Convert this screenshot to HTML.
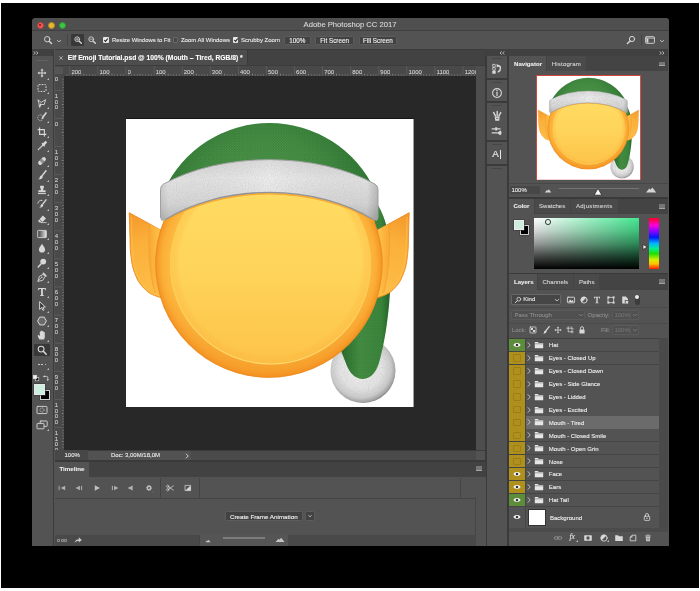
<!DOCTYPE html>
<html><head><meta charset="utf-8">
<style>
*{margin:0;padding:0;box-sizing:border-box}
html,body{width:700px;height:591px;background:#fff;overflow:hidden}
body{font-family:"Liberation Sans",sans-serif;color:#ddd;position:relative}
.a{position:absolute}
.t{position:absolute;white-space:nowrap;line-height:1.12;color:#e2e2e2;-webkit-text-stroke:0.1px currentColor}
.b{font-weight:bold;color:#fff}
svg{overflow:visible}
.s{fill:none;stroke:#d8d8d8;stroke-width:0.9;stroke-linecap:round;stroke-linejoin:round}
.f{fill:#d8d8d8}
</style></head><body>
<div class="a" style="left:0;top:0;width:700px;height:591px;will-change:transform">

<div class="a" style="left:1.00px;top:3.00px;width:698.00px;height:584.80px;background:#000;"></div>
<div class="a" style="left:31.50px;top:18.00px;width:637.00px;height:527.70px;background:#535353;border-radius:3.5px 3.5px 0 0"></div>
<div class="a" style="left:31.50px;top:18.00px;width:637.00px;height:12.20px;background:#4f4f4f;border-radius:3.5px 3.5px 0 0"></div>
<div class="a" style="left:31.50px;top:30.00px;width:637.00px;height:0.80px;background:#404040;"></div>
<div class="a" style="left:36.50px;top:21.60px;width:7.00px;height:7.00px;background:#f25a56;border-radius:50%;border:0.6px solid #b8403c"></div>
<div class="a" style="left:47.60px;top:21.60px;width:7.00px;height:7.00px;background:#e9b62f;border-radius:50%;border:0.6px solid #b08a24"></div>
<div class="a" style="left:58.70px;top:21.60px;width:7.00px;height:7.00px;background:#3cc540;border-radius:50%;border:0.6px solid #2f9634"></div>
<div class="a" style="left:39.00px;top:24.10px;width:2.00px;height:2.00px;background:#6e1613;border-radius:50%"></div>
<div class="t" style="left:250px;width:200px;text-align:center;top:21.0px;font-size:7.64px;color:#dadada">Adobe Photoshop CC 2017</div>
<svg class="a" style="left:40.90px;top:32.60px;" width="14" height="14" viewBox="-7 -7 14 14"><circle cx="-0.8" cy="-0.8" r="2.7" class="s" style="stroke-width:0.95"/><path d="M1.44,1.44 L3.54,3.54" class="s" style="stroke-width:1.4"/></svg>
<svg class="a" style="left:54.60px;top:36.80px;" width="8" height="8" viewBox="-4 -4 8 8"><path d="M-1.7,-0.55 L0,0.8500000000000001 L1.7,-0.55" fill="none" stroke="#cfcfcf" stroke-width="0.8" stroke-linecap="round" stroke-linejoin="round"/></svg>
<div class="a" style="left:66.60px;top:34.00px;width:0.70px;height:12.00px;background:#454545;"></div>
<div class="a" style="left:70.90px;top:34.30px;width:12.80px;height:11.40px;background:#383838;border-radius:1px"></div>
<svg class="a" style="left:71.60px;top:34.00px;" width="12" height="12" viewBox="-6 -6 12 12"><circle cx="-0.8" cy="-0.8" r="2.4" class="s" style="stroke-width:0.85"/><path d="M1.23,1.23 L3.33,3.33" class="s" style="stroke-width:1.4"/><path d="M-2.1,-0.8 H0.5 M-0.8,-2.1 V0.5" class="s" style="stroke-width:0.65"/></svg>
<svg class="a" style="left:85.60px;top:34.00px;" width="12" height="12" viewBox="-6 -6 12 12"><circle cx="-0.8" cy="-0.8" r="2.4" class="s" style="stroke-width:0.85"/><path d="M1.23,1.23 L3.33,3.33" class="s" style="stroke-width:1.4"/><path d="M-2.1,-0.8 H0.5" class="s" style="stroke-width:0.65"/></svg>
<div class="a" style="left:103.20px;top:37.00px;width:5.60px;height:5.60px;background:#e8e8e8;border-radius:1px"></div>
<svg class="a" style="left:103.00px;top:36.80px;" width="6" height="6" viewBox="-3 -3 6 6"><path d="M-1.7,0 L-0.5,1.3 L1.8,-1.5" fill="none" stroke="#222" stroke-width="1.1"/></svg>
<div class="t" style="left:112.00px;top:36.68px;font-size:5.92px;color:#ececec;">Resize Windows to Fit</div>
<div class="a" style="left:172.70px;top:37.00px;width:5.60px;height:5.60px;background:#484848;border-radius:1px;border:0.6px solid #686868"></div>
<div class="t" style="left:180.90px;top:36.66px;font-size:5.97px;color:#ececec;">Zoom All Windows</div>
<div class="a" style="left:232.70px;top:37.00px;width:5.60px;height:5.60px;background:#e8e8e8;border-radius:1px"></div>
<svg class="a" style="left:232.50px;top:36.80px;" width="6" height="6" viewBox="-3 -3 6 6"><path d="M-1.7,0 L-0.5,1.3 L1.8,-1.5" fill="none" stroke="#222" stroke-width="1.1"/></svg>
<div class="t" style="left:240.90px;top:36.64px;font-size:6.0px;color:#ececec;">Scrubby Zoom</div>
<div class="a" style="left:283.70px;top:35.60px;width:27.20px;height:9.20px;background:#424242;border:0.6px solid #5c5c5c;border-radius:1.5px"></div>
<div class="t" style="left:283.7px;width:27.2px;text-align:center;top:36.67px;font-size:6.3px;color:#f2f2f2;-webkit-text-stroke:0.12px #f2f2f2">100%</div>
<div class="a" style="left:314.90px;top:35.60px;width:39.40px;height:9.20px;background:#424242;border:0.6px solid #5c5c5c;border-radius:1.5px"></div>
<div class="t" style="left:314.9px;width:39.4px;text-align:center;top:36.67px;font-size:6.3px;color:#f2f2f2;-webkit-text-stroke:0.12px #f2f2f2">Fit Screen</div>
<div class="a" style="left:358.60px;top:35.60px;width:38.60px;height:9.20px;background:#424242;border:0.6px solid #5c5c5c;border-radius:1.5px"></div>
<div class="t" style="left:358.6px;width:38.6px;text-align:center;top:36.67px;font-size:6.3px;color:#f2f2f2;-webkit-text-stroke:0.12px #f2f2f2">Fill Screen</div>
<svg class="a" style="left:624.50px;top:33.60px;" width="12" height="12" viewBox="-6 -6 12 12"><circle cx="1" cy="-1" r="2.6" class="s" style="stroke-width:1"/><path d="M-0.9,0.9 L-3.6,3.6" class="s" style="stroke-width:1.4"/></svg>
<div class="a" style="left:641.20px;top:34.00px;width:0.70px;height:12.00px;background:#454545;"></div>
<svg class="a" style="left:644.00px;top:34.00px;" width="12" height="12" viewBox="-6 -6 12 12"><rect x="-4.4" y="-3.3" width="8.8" height="6.6" rx="0.8" class="s" style="stroke-width:0.9"/><rect x="-3.6" y="-1.6" width="2" height="4.2" fill="#d8d8d8"/><path d="M-4.4,-1.9 H4.4" class="s" style="stroke-width:0.8"/></svg>
<svg class="a" style="left:658.00px;top:36.80px;" width="8" height="8" viewBox="-4 -4 8 8"><path d="M-1.7,-0.55 L0,0.8500000000000001 L1.7,-0.55" fill="none" stroke="#cfcfcf" stroke-width="0.8" stroke-linecap="round" stroke-linejoin="round"/></svg>
<div class="a" style="left:31.50px;top:49.20px;width:22.00px;height:6.60px;background:#404040;"></div>
<svg class="a" style="left:32.80px;top:49.80px;" width="6" height="6" viewBox="-3 -3 6 6"><path d="M-2.2,-1.6 L-0.7,0 L-2.2,1.6 M0.4,-1.6 L1.9,0 L0.4,1.6" fill="none" stroke="#d0d0d0" stroke-width="0.85"/></svg>
<div class="a" style="left:53.30px;top:49.50px;width:1.20px;height:496.20px;background:#3c3c3c;"></div>
<div class="a" style="left:36.40px;top:59.70px;width:11.60px;height:0.80px;background:#626262;"></div>
<svg class="a" style="left:36.20px;top:67.40px;" width="12" height="12" viewBox="-6 -6 12 12"><path d="M0,-4.4 L1.5,-2.6 H-1.5 Z M0,4.4 L1.5,2.6 H-1.5 Z M-4.4,0 L-2.6,-1.5 V1.5 Z M4.4,0 L2.6,-1.5 V1.5 Z" class="f"/><path d="M0,-3 V3 M-3,0 H3" class="s" style="stroke-width:1"/></svg>
<svg class="a" style="left:46.80px;top:77.60px;" width="2" height="2" viewBox="-1 -1 2 2"><path d="M0.9,-0.9 V0.9 H-0.9 Z" fill="#cfcfcf"/></svg>
<svg class="a" style="left:36.20px;top:81.96px;" width="12" height="12" viewBox="-6 -6 12 12"><rect x="-4" y="-3.4" width="8" height="6.8" rx="0.8" fill="none" stroke="#d8d8d8" stroke-width="1" stroke-dasharray="1.7 1.1"/></svg>
<svg class="a" style="left:46.80px;top:92.16px;" width="2" height="2" viewBox="-1 -1 2 2"><path d="M0.9,-0.9 V0.9 H-0.9 Z" fill="#cfcfcf"/></svg>
<svg class="a" style="left:36.20px;top:96.52px;" width="12" height="12" viewBox="-6 -6 12 12"><path d="M-3.8,-3 L-0.8,-0.6 L3.6,-3.4 L2.2,1.6 L-1.2,1.4 L-2.6,3.8 L-3,0.6 Z" class="s" style="stroke-width:0.9"/><path d="M-1.4,1.2 L-2.2,4.2" class="s" style="stroke-width:1.2"/></svg>
<svg class="a" style="left:46.80px;top:106.72px;" width="2" height="2" viewBox="-1 -1 2 2"><path d="M0.9,-0.9 V0.9 H-0.9 Z" fill="#cfcfcf"/></svg>
<svg class="a" style="left:36.20px;top:111.08px;" width="12" height="12" viewBox="-6 -6 12 12"><ellipse cx="-1.6" cy="0.8" rx="2.6" ry="3" fill="none" stroke="#d8d8d8" stroke-width="0.8" stroke-dasharray="1.2 0.9"/><path d="M4,-4 L0.6,0.4" class="s" style="stroke-width:1.6"/><path d="M0.4,0.2 L-1,2.4 L1.4,1.2 Z" class="f"/></svg>
<svg class="a" style="left:46.80px;top:121.28px;" width="2" height="2" viewBox="-1 -1 2 2"><path d="M0.9,-0.9 V0.9 H-0.9 Z" fill="#cfcfcf"/></svg>
<svg class="a" style="left:36.20px;top:125.64px;" width="12" height="12" viewBox="-6 -6 12 12"><path d="M-2.4,-4.4 V2.4 H4.4 M-4.4,-2.4 H2.4 V4.4" class="s" style="stroke-width:1.1;stroke-linecap:butt"/></svg>
<svg class="a" style="left:46.80px;top:135.84px;" width="2" height="2" viewBox="-1 -1 2 2"><path d="M0.9,-0.9 V0.9 H-0.9 Z" fill="#cfcfcf"/></svg>
<svg class="a" style="left:36.20px;top:140.20px;" width="12" height="12" viewBox="-6 -6 12 12"><path d="M3.6,-3.6 L1.2,-1.2" class="s" style="stroke-width:2.6"/><path d="M0.2,-2.6 L2.6,-0.2" class="s" style="stroke-width:1.1"/><path d="M1,-0.6 L-3,3.4 L-4,4 L-3.4,3 L0.6,-1" class="s" style="stroke-width:1"/></svg>
<svg class="a" style="left:46.80px;top:150.40px;" width="2" height="2" viewBox="-1 -1 2 2"><path d="M0.9,-0.9 V0.9 H-0.9 Z" fill="#cfcfcf"/></svg>
<svg class="a" style="left:36.20px;top:154.76px;" width="12" height="12" viewBox="-6 -6 12 12"><g transform="rotate(-45)"><rect x="-4.6" y="-2" width="9.2" height="4" rx="1.8" class="f"/><rect x="-1.5" y="-2" width="3" height="4" fill="#535353" opacity="0.55"/></g></svg>
<svg class="a" style="left:46.80px;top:164.96px;" width="2" height="2" viewBox="-1 -1 2 2"><path d="M0.9,-0.9 V0.9 H-0.9 Z" fill="#cfcfcf"/></svg>
<svg class="a" style="left:36.20px;top:169.32px;" width="12" height="12" viewBox="-6 -6 12 12"><path d="M4,-4.2 L0.2,0.6" class="s" style="stroke-width:1.5"/><path d="M-0.4,0.4 C-2,0.6 -2.4,2 -2.4,3 C-2.6,3.8 -3.6,4.2 -4,4.2 C-1.8,4.6 0.4,3.8 0.9,1.7 Z" class="f"/></svg>
<svg class="a" style="left:46.80px;top:179.52px;" width="2" height="2" viewBox="-1 -1 2 2"><path d="M0.9,-0.9 V0.9 H-0.9 Z" fill="#cfcfcf"/></svg>
<svg class="a" style="left:36.20px;top:183.88px;" width="12" height="12" viewBox="-6 -6 12 12"><path d="M-1.3,-4.2 H1.3 C2.2,-4.2 2.2,-2.6 1.4,-1.6 L1,0.2 H3.6 V2.2 H-3.6 V0.2 H-1 L-1.4,-1.6 C-2.2,-2.6 -2.2,-4.2 -1.3,-4.2 Z" class="f"/><path d="M-3.6,3.6 H3.6" class="s" style="stroke-width:1"/></svg>
<svg class="a" style="left:46.80px;top:194.08px;" width="2" height="2" viewBox="-1 -1 2 2"><path d="M0.9,-0.9 V0.9 H-0.9 Z" fill="#cfcfcf"/></svg>
<svg class="a" style="left:36.20px;top:198.44px;" width="12" height="12" viewBox="-6 -6 12 12"><path d="M4,-4.2 L0.8,0.2" class="s" style="stroke-width:1.4"/><path d="M0.2,0 C-1.2,0.2 -1.4,1.4 -1.4,2.2 C-1.6,3 -2.4,3.4 -2.8,3.4 C-1,3.8 0.8,3 1.3,1.2 Z" class="f"/><path d="M-4.2,-0.6 A3,3 0 0 1 -0.4,-3.6" class="s" style="stroke-width:0.8"/><path d="M-0.2,-4.6 L0.6,-3.2 L-1,-3 Z" class="f"/></svg>
<svg class="a" style="left:46.80px;top:208.64px;" width="2" height="2" viewBox="-1 -1 2 2"><path d="M0.9,-0.9 V0.9 H-0.9 Z" fill="#cfcfcf"/></svg>
<svg class="a" style="left:36.20px;top:213.00px;" width="12" height="12" viewBox="-6 -6 12 12"><path d="M0.8,-3.6 L4,-0.4 L0,3.6 H-2.4 L-4,2 Z" class="f"/><path d="M-2.6,0.6 L0.6,3.6" stroke="#535353" stroke-width="0.8"/><path d="M-1,3.6 H4.2" class="s" style="stroke-width:0.8"/></svg>
<svg class="a" style="left:46.80px;top:223.20px;" width="2" height="2" viewBox="-1 -1 2 2"><path d="M0.9,-0.9 V0.9 H-0.9 Z" fill="#cfcfcf"/></svg>
<svg class="a" style="left:36.20px;top:227.56px;" width="12" height="12" viewBox="-6 -6 12 12"><defs><linearGradient id="gtool" x1="0" x2="1"><stop offset="0" stop-color="#3a3a3a"/><stop offset="1" stop-color="#e6e6e6"/></linearGradient></defs><rect x="-4.3" y="-3.6" width="8.6" height="7.2" rx="0.6" fill="url(#gtool)" stroke="#d8d8d8" stroke-width="0.9"/></svg>
<svg class="a" style="left:46.80px;top:237.76px;" width="2" height="2" viewBox="-1 -1 2 2"><path d="M0.9,-0.9 V0.9 H-0.9 Z" fill="#cfcfcf"/></svg>
<svg class="a" style="left:36.20px;top:242.12px;" width="12" height="12" viewBox="-6 -6 12 12"><path d="M0,-4.2 C1.4,-1.8 3.1,-0.2 3.1,1.5 A3.1,3.1 0 0 1 -3.1,1.5 C-3.1,-0.2 -1.4,-1.8 0,-4.2 Z" class="f"/></svg>
<svg class="a" style="left:46.80px;top:252.32px;" width="2" height="2" viewBox="-1 -1 2 2"><path d="M0.9,-0.9 V0.9 H-0.9 Z" fill="#cfcfcf"/></svg>
<svg class="a" style="left:36.20px;top:256.68px;" width="12" height="12" viewBox="-6 -6 12 12"><circle cx="1.2" cy="-1.4" r="2.9" class="f"/><path d="M-0.8,0.8 L-3.8,4" class="s" style="stroke-width:1.4"/></svg>
<svg class="a" style="left:46.80px;top:266.88px;" width="2" height="2" viewBox="-1 -1 2 2"><path d="M0.9,-0.9 V0.9 H-0.9 Z" fill="#cfcfcf"/></svg>
<svg class="a" style="left:36.20px;top:271.24px;" width="12" height="12" viewBox="-6 -6 12 12"><path d="M-4,4 L-2.6,-0.6 L1,-2.6 L3,-0.6 L1,3 Z" class="s" style="stroke-width:0.9"/><path d="M-4,4 L-0.6,0.6" class="s" style="stroke-width:0.7"/><circle cx="-0.2" cy="0.2" r="0.8" class="f"/><path d="M1.4,-3.6 L4,-1" class="s" style="stroke-width:1.5"/></svg>
<svg class="a" style="left:46.80px;top:281.44px;" width="2" height="2" viewBox="-1 -1 2 2"><path d="M0.9,-0.9 V0.9 H-0.9 Z" fill="#cfcfcf"/></svg>
<svg class="a" style="left:36.20px;top:285.80px;" width="12" height="12" viewBox="-6 -6 12 12"><path d="M-3.8,-4 H3.8 V-1.8 H3.1 L2.6,-3 H0.9 V3 L2,3.4 V4 H-2 V3.4 L-0.9,3 V-3 H-2.6 L-3.1,-1.8 H-3.8 Z" class="f"/></svg>
<svg class="a" style="left:46.80px;top:296.00px;" width="2" height="2" viewBox="-1 -1 2 2"><path d="M0.9,-0.9 V0.9 H-0.9 Z" fill="#cfcfcf"/></svg>
<svg class="a" style="left:36.20px;top:300.36px;" width="12" height="12" viewBox="-6 -6 12 12"><path d="M-2.4,-4.4 L-2.4,3.4 L-0.4,1.6 L0.9,4.4 L2.1,3.8 L0.8,1.1 L3.4,1 Z" fill="#3a3a3a" stroke="#e0e0e0" stroke-width="0.9" stroke-linejoin="round"/></svg>
<svg class="a" style="left:46.80px;top:310.56px;" width="2" height="2" viewBox="-1 -1 2 2"><path d="M0.9,-0.9 V0.9 H-0.9 Z" fill="#cfcfcf"/></svg>
<svg class="a" style="left:36.20px;top:314.92px;" width="12" height="12" viewBox="-6 -6 12 12"><path d="M-2.2,-3.9 H2.2 L4.4,0 L2.2,3.9 H-2.2 L-4.4,0 Z" fill="#6a6a6a" stroke="#d8d8d8" stroke-width="1" stroke-linejoin="round"/></svg>
<svg class="a" style="left:46.80px;top:325.12px;" width="2" height="2" viewBox="-1 -1 2 2"><path d="M0.9,-0.9 V0.9 H-0.9 Z" fill="#cfcfcf"/></svg>
<svg class="a" style="left:36.20px;top:329.48px;" width="12" height="12" viewBox="-6 -6 12 12"><path d="M-2.6,4.4 C-3.4,2.6 -4.6,1 -4.2,0.2 C-3.6,-0.6 -2.8,0.6 -2.2,1 V-3 C-2.2,-4 -1,-4 -1,-3 V-3.8 C-1,-4.8 0.3,-4.8 0.3,-3.8 V-3.2 C0.3,-4.2 1.6,-4.2 1.6,-3.2 V-2.4 C1.6,-3.2 2.8,-3.2 2.8,-2.4 V1.4 C2.8,2.8 2.4,3.4 2,4.4 Z" class="f"/></svg>
<svg class="a" style="left:46.80px;top:339.68px;" width="2" height="2" viewBox="-1 -1 2 2"><path d="M0.9,-0.9 V0.9 H-0.9 Z" fill="#cfcfcf"/></svg>
<div class="a" style="left:34.10px;top:343.80px;width:16.20px;height:12.40px;background:#383838;border-radius:1px"></div>
<svg class="a" style="left:36.20px;top:344.04px;" width="12" height="12" viewBox="-6 -6 12 12"><circle cx="-0.9" cy="-0.9" r="2.9" class="s" style="stroke-width:1.05"/><path d="M1.3,1.3 L4.2,4.2" class="s" style="stroke-width:1.6"/></svg>
<div class="a" style="left:38.35px;top:363.85px;width:1.50px;height:1.50px;background:#d8d8d8;border-radius:50%"></div>
<div class="a" style="left:41.45px;top:363.85px;width:1.50px;height:1.50px;background:#d8d8d8;border-radius:50%"></div>
<div class="a" style="left:44.55px;top:363.85px;width:1.50px;height:1.50px;background:#d8d8d8;border-radius:50%"></div>
<svg class="a" style="left:46.80px;top:367.80px;" width="2" height="2" viewBox="-1 -1 2 2"><path d="M0.9,-0.9 V0.9 H-0.9 Z" fill="#cfcfcf"/></svg>
<svg class="a" style="left:32.40px;top:374.00px;" width="8" height="8" viewBox="-4 -4 8 8"><rect x="-0.6" y="-0.6" width="3.4" height="3.4" fill="#111" stroke="#e0e0e0" stroke-width="0.6"/><rect x="-2.8" y="-2.8" width="3.6" height="3.6" fill="#f0f0f0" stroke="#e0e0e0" stroke-width="0.5"/></svg>
<svg class="a" style="left:42.40px;top:374.00px;" width="8" height="8" viewBox="-4 -4 8 8"><path d="M-1.8,-1.6 H0.6 A1.2,1.2 0 0 1 1.8,-0.4 V1.8" class="s" style="stroke-width:0.8"/><path d="M-3,-1.6 L-1.4,-2.8 V-0.4 Z M1.8,3 L0.6,1.4 H3 Z" class="f"/></svg>
<div class="a" style="left:39.80px;top:389.50px;width:10.40px;height:10.60px;background:#000;border:0.7px solid #d0d0d0;box-shadow:0 0 0 0.5px #3a3a3a"></div>
<div class="a" style="left:34.10px;top:383.80px;width:10.60px;height:10.80px;background:#ccefdf;border:0.7px solid #e8e8e8;box-shadow:0 0 0 0.6px #3a3a3a"></div>
<svg class="a" style="left:36.40px;top:404.20px;" width="12" height="12" viewBox="-6 -6 12 12"><rect x="-5" y="-3.6" width="10" height="7.2" rx="0.8" class="s" style="stroke-width:0.9"/><circle r="2" fill="none" stroke="#d8d8d8" stroke-width="0.8" stroke-dasharray="1 0.7"/></svg>
<svg class="a" style="left:36.20px;top:419.00px;" width="12" height="12" viewBox="-6 -6 12 12"><rect x="-1.8" y="-4" width="7" height="5.4" rx="0.6" class="s" style="stroke-width:0.9"/><rect x="-5" y="-1.6" width="7" height="5.4" rx="0.6" fill="#535353" stroke="#d8d8d8" stroke-width="0.9"/></svg>
<svg class="a" style="left:46.80px;top:429.40px;" width="2" height="2" viewBox="-1 -1 2 2"><path d="M0.9,-0.9 V0.9 H-0.9 Z" fill="#cfcfcf"/></svg>
<div class="a" style="left:54.50px;top:49.20px;width:431.30px;height:16.50px;background:#424242;"></div>
<div class="a" style="left:54.50px;top:49.20px;width:431.30px;height:0.90px;background:#3a3a3a;"></div>
<div class="a" style="left:54.50px;top:50.00px;width:192.50px;height:15.70px;background:#4d4d4d;"></div>
<div class="a" style="left:247.00px;top:50.00px;width:0.80px;height:15.70px;background:#3a3a3a;"></div>
<svg class="a" style="left:57.60px;top:55.00px;" width="6" height="6" viewBox="-3 -3 6 6"><path d="M-1.7,-1.7 L1.7,1.7 M1.7,-1.7 L-1.7,1.7" stroke="#cfcfcf" stroke-width="0.7" fill="none"/></svg>
<div class="t b" style="left:67.70px;top:54.23px;font-size:6.73px;color:#fff;">Elf Emoji Tutorial.psd @ 100% (Mouth &#8211; Tired, RGB/8) *</div>
<div class="a" style="left:54.50px;top:65.70px;width:421.50px;height:10.00px;background:#494949;"></div>
<div class="a" style="left:54.50px;top:75.70px;width:9.20px;height:374.70px;background:#494949;"></div>
<div class="a" style="left:54.50px;top:65.40px;width:431.30px;height:0.70px;background:#3c3c3c;"></div>
<div class="a" style="left:63.70px;top:75.70px;width:412.30px;height:374.70px;background:#282828;"></div>
<div class="a" style="left:476.00px;top:65.70px;width:9.80px;height:384.70px;background:#4e4e4e;"></div>
<svg class="a" style="left:0;top:0" width="700" height="591"><rect x="66.67" y="74.50" width="0.7" height="1.0" fill="#9a9a9a"/><rect x="72.29" y="74.50" width="0.7" height="1.0" fill="#9a9a9a"/><rect x="75.10" y="74.50" width="0.7" height="1.0" fill="#9a9a9a"/><rect x="77.90" y="74.50" width="0.7" height="1.0" fill="#9a9a9a"/><rect x="80.71" y="74.50" width="0.7" height="1.0" fill="#9a9a9a"/><rect x="83.52" y="73.80" width="0.7" height="1.7" fill="#9a9a9a"/><rect x="86.33" y="74.50" width="0.7" height="1.0" fill="#9a9a9a"/><rect x="89.14" y="74.50" width="0.7" height="1.0" fill="#9a9a9a"/><rect x="91.95" y="74.50" width="0.7" height="1.0" fill="#9a9a9a"/><rect x="94.76" y="74.50" width="0.7" height="1.0" fill="#9a9a9a"/><rect x="100.37" y="74.50" width="0.7" height="1.0" fill="#9a9a9a"/><rect x="103.18" y="74.50" width="0.7" height="1.0" fill="#9a9a9a"/><rect x="105.99" y="74.50" width="0.7" height="1.0" fill="#9a9a9a"/><rect x="108.80" y="74.50" width="0.7" height="1.0" fill="#9a9a9a"/><rect x="111.61" y="73.80" width="0.7" height="1.7" fill="#9a9a9a"/><rect x="114.42" y="74.50" width="0.7" height="1.0" fill="#9a9a9a"/><rect x="117.22" y="74.50" width="0.7" height="1.0" fill="#9a9a9a"/><rect x="120.03" y="74.50" width="0.7" height="1.0" fill="#9a9a9a"/><rect x="122.84" y="74.50" width="0.7" height="1.0" fill="#9a9a9a"/><rect x="128.46" y="74.50" width="0.7" height="1.0" fill="#9a9a9a"/><rect x="131.27" y="74.50" width="0.7" height="1.0" fill="#9a9a9a"/><rect x="134.08" y="74.50" width="0.7" height="1.0" fill="#9a9a9a"/><rect x="136.88" y="74.50" width="0.7" height="1.0" fill="#9a9a9a"/><rect x="139.69" y="73.80" width="0.7" height="1.7" fill="#9a9a9a"/><rect x="142.50" y="74.50" width="0.7" height="1.0" fill="#9a9a9a"/><rect x="145.31" y="74.50" width="0.7" height="1.0" fill="#9a9a9a"/><rect x="148.12" y="74.50" width="0.7" height="1.0" fill="#9a9a9a"/><rect x="150.93" y="74.50" width="0.7" height="1.0" fill="#9a9a9a"/><rect x="156.54" y="74.50" width="0.7" height="1.0" fill="#9a9a9a"/><rect x="159.35" y="74.50" width="0.7" height="1.0" fill="#9a9a9a"/><rect x="162.16" y="74.50" width="0.7" height="1.0" fill="#9a9a9a"/><rect x="164.97" y="74.50" width="0.7" height="1.0" fill="#9a9a9a"/><rect x="167.78" y="73.80" width="0.7" height="1.7" fill="#9a9a9a"/><rect x="170.59" y="74.50" width="0.7" height="1.0" fill="#9a9a9a"/><rect x="173.40" y="74.50" width="0.7" height="1.0" fill="#9a9a9a"/><rect x="176.20" y="74.50" width="0.7" height="1.0" fill="#9a9a9a"/><rect x="179.01" y="74.50" width="0.7" height="1.0" fill="#9a9a9a"/><rect x="184.63" y="74.50" width="0.7" height="1.0" fill="#9a9a9a"/><rect x="187.44" y="74.50" width="0.7" height="1.0" fill="#9a9a9a"/><rect x="190.25" y="74.50" width="0.7" height="1.0" fill="#9a9a9a"/><rect x="193.06" y="74.50" width="0.7" height="1.0" fill="#9a9a9a"/><rect x="195.87" y="73.80" width="0.7" height="1.7" fill="#9a9a9a"/><rect x="198.67" y="74.50" width="0.7" height="1.0" fill="#9a9a9a"/><rect x="201.48" y="74.50" width="0.7" height="1.0" fill="#9a9a9a"/><rect x="204.29" y="74.50" width="0.7" height="1.0" fill="#9a9a9a"/><rect x="207.10" y="74.50" width="0.7" height="1.0" fill="#9a9a9a"/><rect x="212.72" y="74.50" width="0.7" height="1.0" fill="#9a9a9a"/><rect x="215.53" y="74.50" width="0.7" height="1.0" fill="#9a9a9a"/><rect x="218.33" y="74.50" width="0.7" height="1.0" fill="#9a9a9a"/><rect x="221.14" y="74.50" width="0.7" height="1.0" fill="#9a9a9a"/><rect x="223.95" y="73.80" width="0.7" height="1.7" fill="#9a9a9a"/><rect x="226.76" y="74.50" width="0.7" height="1.0" fill="#9a9a9a"/><rect x="229.57" y="74.50" width="0.7" height="1.0" fill="#9a9a9a"/><rect x="232.38" y="74.50" width="0.7" height="1.0" fill="#9a9a9a"/><rect x="235.19" y="74.50" width="0.7" height="1.0" fill="#9a9a9a"/><rect x="240.80" y="74.50" width="0.7" height="1.0" fill="#9a9a9a"/><rect x="243.61" y="74.50" width="0.7" height="1.0" fill="#9a9a9a"/><rect x="246.42" y="74.50" width="0.7" height="1.0" fill="#9a9a9a"/><rect x="249.23" y="74.50" width="0.7" height="1.0" fill="#9a9a9a"/><rect x="252.04" y="73.80" width="0.7" height="1.7" fill="#9a9a9a"/><rect x="254.85" y="74.50" width="0.7" height="1.0" fill="#9a9a9a"/><rect x="257.65" y="74.50" width="0.7" height="1.0" fill="#9a9a9a"/><rect x="260.46" y="74.50" width="0.7" height="1.0" fill="#9a9a9a"/><rect x="263.27" y="74.50" width="0.7" height="1.0" fill="#9a9a9a"/><rect x="268.89" y="74.50" width="0.7" height="1.0" fill="#9a9a9a"/><rect x="271.70" y="74.50" width="0.7" height="1.0" fill="#9a9a9a"/><rect x="274.51" y="74.50" width="0.7" height="1.0" fill="#9a9a9a"/><rect x="277.31" y="74.50" width="0.7" height="1.0" fill="#9a9a9a"/><rect x="280.12" y="73.80" width="0.7" height="1.7" fill="#9a9a9a"/><rect x="282.93" y="74.50" width="0.7" height="1.0" fill="#9a9a9a"/><rect x="285.74" y="74.50" width="0.7" height="1.0" fill="#9a9a9a"/><rect x="288.55" y="74.50" width="0.7" height="1.0" fill="#9a9a9a"/><rect x="291.36" y="74.50" width="0.7" height="1.0" fill="#9a9a9a"/><rect x="296.97" y="74.50" width="0.7" height="1.0" fill="#9a9a9a"/><rect x="299.78" y="74.50" width="0.7" height="1.0" fill="#9a9a9a"/><rect x="302.59" y="74.50" width="0.7" height="1.0" fill="#9a9a9a"/><rect x="305.40" y="74.50" width="0.7" height="1.0" fill="#9a9a9a"/><rect x="308.21" y="73.80" width="0.7" height="1.7" fill="#9a9a9a"/><rect x="311.02" y="74.50" width="0.7" height="1.0" fill="#9a9a9a"/><rect x="313.83" y="74.50" width="0.7" height="1.0" fill="#9a9a9a"/><rect x="316.63" y="74.50" width="0.7" height="1.0" fill="#9a9a9a"/><rect x="319.44" y="74.50" width="0.7" height="1.0" fill="#9a9a9a"/><rect x="325.06" y="74.50" width="0.7" height="1.0" fill="#9a9a9a"/><rect x="327.87" y="74.50" width="0.7" height="1.0" fill="#9a9a9a"/><rect x="330.68" y="74.50" width="0.7" height="1.0" fill="#9a9a9a"/><rect x="333.49" y="74.50" width="0.7" height="1.0" fill="#9a9a9a"/><rect x="336.29" y="73.80" width="0.7" height="1.7" fill="#9a9a9a"/><rect x="339.10" y="74.50" width="0.7" height="1.0" fill="#9a9a9a"/><rect x="341.91" y="74.50" width="0.7" height="1.0" fill="#9a9a9a"/><rect x="344.72" y="74.50" width="0.7" height="1.0" fill="#9a9a9a"/><rect x="347.53" y="74.50" width="0.7" height="1.0" fill="#9a9a9a"/><rect x="353.15" y="74.50" width="0.7" height="1.0" fill="#9a9a9a"/><rect x="355.96" y="74.50" width="0.7" height="1.0" fill="#9a9a9a"/><rect x="358.76" y="74.50" width="0.7" height="1.0" fill="#9a9a9a"/><rect x="361.57" y="74.50" width="0.7" height="1.0" fill="#9a9a9a"/><rect x="364.38" y="73.80" width="0.7" height="1.7" fill="#9a9a9a"/><rect x="367.19" y="74.50" width="0.7" height="1.0" fill="#9a9a9a"/><rect x="370.00" y="74.50" width="0.7" height="1.0" fill="#9a9a9a"/><rect x="372.81" y="74.50" width="0.7" height="1.0" fill="#9a9a9a"/><rect x="375.62" y="74.50" width="0.7" height="1.0" fill="#9a9a9a"/><rect x="381.23" y="74.50" width="0.7" height="1.0" fill="#9a9a9a"/><rect x="384.04" y="74.50" width="0.7" height="1.0" fill="#9a9a9a"/><rect x="386.85" y="74.50" width="0.7" height="1.0" fill="#9a9a9a"/><rect x="389.66" y="74.50" width="0.7" height="1.0" fill="#9a9a9a"/><rect x="392.47" y="73.80" width="0.7" height="1.7" fill="#9a9a9a"/><rect x="395.28" y="74.50" width="0.7" height="1.0" fill="#9a9a9a"/><rect x="398.08" y="74.50" width="0.7" height="1.0" fill="#9a9a9a"/><rect x="400.89" y="74.50" width="0.7" height="1.0" fill="#9a9a9a"/><rect x="403.70" y="74.50" width="0.7" height="1.0" fill="#9a9a9a"/><rect x="409.32" y="74.50" width="0.7" height="1.0" fill="#9a9a9a"/><rect x="412.13" y="74.50" width="0.7" height="1.0" fill="#9a9a9a"/><rect x="414.94" y="74.50" width="0.7" height="1.0" fill="#9a9a9a"/><rect x="417.74" y="74.50" width="0.7" height="1.0" fill="#9a9a9a"/><rect x="420.55" y="73.80" width="0.7" height="1.7" fill="#9a9a9a"/><rect x="423.36" y="74.50" width="0.7" height="1.0" fill="#9a9a9a"/><rect x="426.17" y="74.50" width="0.7" height="1.0" fill="#9a9a9a"/><rect x="428.98" y="74.50" width="0.7" height="1.0" fill="#9a9a9a"/><rect x="431.79" y="74.50" width="0.7" height="1.0" fill="#9a9a9a"/><rect x="437.40" y="74.50" width="0.7" height="1.0" fill="#9a9a9a"/><rect x="440.21" y="74.50" width="0.7" height="1.0" fill="#9a9a9a"/><rect x="443.02" y="74.50" width="0.7" height="1.0" fill="#9a9a9a"/><rect x="445.83" y="74.50" width="0.7" height="1.0" fill="#9a9a9a"/><rect x="448.64" y="73.80" width="0.7" height="1.7" fill="#9a9a9a"/><rect x="451.45" y="74.50" width="0.7" height="1.0" fill="#9a9a9a"/><rect x="454.26" y="74.50" width="0.7" height="1.0" fill="#9a9a9a"/><rect x="457.06" y="74.50" width="0.7" height="1.0" fill="#9a9a9a"/><rect x="459.87" y="74.50" width="0.7" height="1.0" fill="#9a9a9a"/><rect x="465.49" y="74.50" width="0.7" height="1.0" fill="#9a9a9a"/><rect x="468.30" y="74.50" width="0.7" height="1.0" fill="#9a9a9a"/><rect x="471.11" y="74.50" width="0.7" height="1.0" fill="#9a9a9a"/><rect x="473.92" y="74.50" width="0.7" height="1.0" fill="#9a9a9a"/><rect x="69.48" y="66" width="0.7" height="9.7" fill="#626262"/><rect x="97.56" y="66" width="0.7" height="9.7" fill="#626262"/><rect x="125.65" y="66" width="0.7" height="9.7" fill="#626262"/><rect x="153.74" y="66" width="0.7" height="9.7" fill="#626262"/><rect x="181.82" y="66" width="0.7" height="9.7" fill="#626262"/><rect x="209.91" y="66" width="0.7" height="9.7" fill="#626262"/><rect x="237.99" y="66" width="0.7" height="9.7" fill="#626262"/><rect x="266.08" y="66" width="0.7" height="9.7" fill="#626262"/><rect x="294.17" y="66" width="0.7" height="9.7" fill="#626262"/><rect x="322.25" y="66" width="0.7" height="9.7" fill="#626262"/><rect x="350.34" y="66" width="0.7" height="9.7" fill="#626262"/><rect x="378.42" y="66" width="0.7" height="9.7" fill="#626262"/><rect x="406.51" y="66" width="0.7" height="9.7" fill="#626262"/><rect x="434.60" y="66" width="0.7" height="9.7" fill="#626262"/><rect x="462.68" y="66" width="0.7" height="9.7" fill="#626262"/><rect x="62.50" y="78.83" width="1.0" height="0.7" fill="#9a9a9a"/><rect x="62.50" y="81.64" width="1.0" height="0.7" fill="#9a9a9a"/><rect x="62.50" y="84.45" width="1.0" height="0.7" fill="#9a9a9a"/><rect x="62.50" y="87.26" width="1.0" height="0.7" fill="#9a9a9a"/><rect x="62.50" y="92.87" width="1.0" height="0.7" fill="#9a9a9a"/><rect x="62.50" y="95.68" width="1.0" height="0.7" fill="#9a9a9a"/><rect x="62.50" y="98.49" width="1.0" height="0.7" fill="#9a9a9a"/><rect x="62.50" y="101.30" width="1.0" height="0.7" fill="#9a9a9a"/><rect x="61.80" y="104.11" width="1.7" height="0.7" fill="#9a9a9a"/><rect x="62.50" y="106.92" width="1.0" height="0.7" fill="#9a9a9a"/><rect x="62.50" y="109.72" width="1.0" height="0.7" fill="#9a9a9a"/><rect x="62.50" y="112.53" width="1.0" height="0.7" fill="#9a9a9a"/><rect x="62.50" y="115.34" width="1.0" height="0.7" fill="#9a9a9a"/><rect x="62.50" y="120.96" width="1.0" height="0.7" fill="#9a9a9a"/><rect x="62.50" y="123.77" width="1.0" height="0.7" fill="#9a9a9a"/><rect x="62.50" y="126.58" width="1.0" height="0.7" fill="#9a9a9a"/><rect x="62.50" y="129.38" width="1.0" height="0.7" fill="#9a9a9a"/><rect x="61.80" y="132.19" width="1.7" height="0.7" fill="#9a9a9a"/><rect x="62.50" y="135.00" width="1.0" height="0.7" fill="#9a9a9a"/><rect x="62.50" y="137.81" width="1.0" height="0.7" fill="#9a9a9a"/><rect x="62.50" y="140.62" width="1.0" height="0.7" fill="#9a9a9a"/><rect x="62.50" y="143.43" width="1.0" height="0.7" fill="#9a9a9a"/><rect x="62.50" y="149.04" width="1.0" height="0.7" fill="#9a9a9a"/><rect x="62.50" y="151.85" width="1.0" height="0.7" fill="#9a9a9a"/><rect x="62.50" y="154.66" width="1.0" height="0.7" fill="#9a9a9a"/><rect x="62.50" y="157.47" width="1.0" height="0.7" fill="#9a9a9a"/><rect x="61.80" y="160.28" width="1.7" height="0.7" fill="#9a9a9a"/><rect x="62.50" y="163.09" width="1.0" height="0.7" fill="#9a9a9a"/><rect x="62.50" y="165.90" width="1.0" height="0.7" fill="#9a9a9a"/><rect x="62.50" y="168.70" width="1.0" height="0.7" fill="#9a9a9a"/><rect x="62.50" y="171.51" width="1.0" height="0.7" fill="#9a9a9a"/><rect x="62.50" y="177.13" width="1.0" height="0.7" fill="#9a9a9a"/><rect x="62.50" y="179.94" width="1.0" height="0.7" fill="#9a9a9a"/><rect x="62.50" y="182.75" width="1.0" height="0.7" fill="#9a9a9a"/><rect x="62.50" y="185.56" width="1.0" height="0.7" fill="#9a9a9a"/><rect x="61.80" y="188.37" width="1.7" height="0.7" fill="#9a9a9a"/><rect x="62.50" y="191.17" width="1.0" height="0.7" fill="#9a9a9a"/><rect x="62.50" y="193.98" width="1.0" height="0.7" fill="#9a9a9a"/><rect x="62.50" y="196.79" width="1.0" height="0.7" fill="#9a9a9a"/><rect x="62.50" y="199.60" width="1.0" height="0.7" fill="#9a9a9a"/><rect x="62.50" y="205.22" width="1.0" height="0.7" fill="#9a9a9a"/><rect x="62.50" y="208.03" width="1.0" height="0.7" fill="#9a9a9a"/><rect x="62.50" y="210.83" width="1.0" height="0.7" fill="#9a9a9a"/><rect x="62.50" y="213.64" width="1.0" height="0.7" fill="#9a9a9a"/><rect x="61.80" y="216.45" width="1.7" height="0.7" fill="#9a9a9a"/><rect x="62.50" y="219.26" width="1.0" height="0.7" fill="#9a9a9a"/><rect x="62.50" y="222.07" width="1.0" height="0.7" fill="#9a9a9a"/><rect x="62.50" y="224.88" width="1.0" height="0.7" fill="#9a9a9a"/><rect x="62.50" y="227.69" width="1.0" height="0.7" fill="#9a9a9a"/><rect x="62.50" y="233.30" width="1.0" height="0.7" fill="#9a9a9a"/><rect x="62.50" y="236.11" width="1.0" height="0.7" fill="#9a9a9a"/><rect x="62.50" y="238.92" width="1.0" height="0.7" fill="#9a9a9a"/><rect x="62.50" y="241.73" width="1.0" height="0.7" fill="#9a9a9a"/><rect x="61.80" y="244.54" width="1.7" height="0.7" fill="#9a9a9a"/><rect x="62.50" y="247.35" width="1.0" height="0.7" fill="#9a9a9a"/><rect x="62.50" y="250.15" width="1.0" height="0.7" fill="#9a9a9a"/><rect x="62.50" y="252.96" width="1.0" height="0.7" fill="#9a9a9a"/><rect x="62.50" y="255.77" width="1.0" height="0.7" fill="#9a9a9a"/><rect x="62.50" y="261.39" width="1.0" height="0.7" fill="#9a9a9a"/><rect x="62.50" y="264.20" width="1.0" height="0.7" fill="#9a9a9a"/><rect x="62.50" y="267.01" width="1.0" height="0.7" fill="#9a9a9a"/><rect x="62.50" y="269.81" width="1.0" height="0.7" fill="#9a9a9a"/><rect x="61.80" y="272.62" width="1.7" height="0.7" fill="#9a9a9a"/><rect x="62.50" y="275.43" width="1.0" height="0.7" fill="#9a9a9a"/><rect x="62.50" y="278.24" width="1.0" height="0.7" fill="#9a9a9a"/><rect x="62.50" y="281.05" width="1.0" height="0.7" fill="#9a9a9a"/><rect x="62.50" y="283.86" width="1.0" height="0.7" fill="#9a9a9a"/><rect x="62.50" y="289.47" width="1.0" height="0.7" fill="#9a9a9a"/><rect x="62.50" y="292.28" width="1.0" height="0.7" fill="#9a9a9a"/><rect x="62.50" y="295.09" width="1.0" height="0.7" fill="#9a9a9a"/><rect x="62.50" y="297.90" width="1.0" height="0.7" fill="#9a9a9a"/><rect x="61.80" y="300.71" width="1.7" height="0.7" fill="#9a9a9a"/><rect x="62.50" y="303.52" width="1.0" height="0.7" fill="#9a9a9a"/><rect x="62.50" y="306.33" width="1.0" height="0.7" fill="#9a9a9a"/><rect x="62.50" y="309.13" width="1.0" height="0.7" fill="#9a9a9a"/><rect x="62.50" y="311.94" width="1.0" height="0.7" fill="#9a9a9a"/><rect x="62.50" y="317.56" width="1.0" height="0.7" fill="#9a9a9a"/><rect x="62.50" y="320.37" width="1.0" height="0.7" fill="#9a9a9a"/><rect x="62.50" y="323.18" width="1.0" height="0.7" fill="#9a9a9a"/><rect x="62.50" y="325.99" width="1.0" height="0.7" fill="#9a9a9a"/><rect x="61.80" y="328.79" width="1.7" height="0.7" fill="#9a9a9a"/><rect x="62.50" y="331.60" width="1.0" height="0.7" fill="#9a9a9a"/><rect x="62.50" y="334.41" width="1.0" height="0.7" fill="#9a9a9a"/><rect x="62.50" y="337.22" width="1.0" height="0.7" fill="#9a9a9a"/><rect x="62.50" y="340.03" width="1.0" height="0.7" fill="#9a9a9a"/><rect x="62.50" y="345.65" width="1.0" height="0.7" fill="#9a9a9a"/><rect x="62.50" y="348.46" width="1.0" height="0.7" fill="#9a9a9a"/><rect x="62.50" y="351.26" width="1.0" height="0.7" fill="#9a9a9a"/><rect x="62.50" y="354.07" width="1.0" height="0.7" fill="#9a9a9a"/><rect x="61.80" y="356.88" width="1.7" height="0.7" fill="#9a9a9a"/><rect x="62.50" y="359.69" width="1.0" height="0.7" fill="#9a9a9a"/><rect x="62.50" y="362.50" width="1.0" height="0.7" fill="#9a9a9a"/><rect x="62.50" y="365.31" width="1.0" height="0.7" fill="#9a9a9a"/><rect x="62.50" y="368.12" width="1.0" height="0.7" fill="#9a9a9a"/><rect x="62.50" y="373.73" width="1.0" height="0.7" fill="#9a9a9a"/><rect x="62.50" y="376.54" width="1.0" height="0.7" fill="#9a9a9a"/><rect x="62.50" y="379.35" width="1.0" height="0.7" fill="#9a9a9a"/><rect x="62.50" y="382.16" width="1.0" height="0.7" fill="#9a9a9a"/><rect x="61.80" y="384.97" width="1.7" height="0.7" fill="#9a9a9a"/><rect x="62.50" y="387.78" width="1.0" height="0.7" fill="#9a9a9a"/><rect x="62.50" y="390.58" width="1.0" height="0.7" fill="#9a9a9a"/><rect x="62.50" y="393.39" width="1.0" height="0.7" fill="#9a9a9a"/><rect x="62.50" y="396.20" width="1.0" height="0.7" fill="#9a9a9a"/><rect x="62.50" y="401.82" width="1.0" height="0.7" fill="#9a9a9a"/><rect x="62.50" y="404.63" width="1.0" height="0.7" fill="#9a9a9a"/><rect x="62.50" y="407.44" width="1.0" height="0.7" fill="#9a9a9a"/><rect x="62.50" y="410.24" width="1.0" height="0.7" fill="#9a9a9a"/><rect x="61.80" y="413.05" width="1.7" height="0.7" fill="#9a9a9a"/><rect x="62.50" y="415.86" width="1.0" height="0.7" fill="#9a9a9a"/><rect x="62.50" y="418.67" width="1.0" height="0.7" fill="#9a9a9a"/><rect x="62.50" y="421.48" width="1.0" height="0.7" fill="#9a9a9a"/><rect x="62.50" y="424.29" width="1.0" height="0.7" fill="#9a9a9a"/><rect x="62.50" y="429.90" width="1.0" height="0.7" fill="#9a9a9a"/><rect x="62.50" y="432.71" width="1.0" height="0.7" fill="#9a9a9a"/><rect x="62.50" y="435.52" width="1.0" height="0.7" fill="#9a9a9a"/><rect x="62.50" y="438.33" width="1.0" height="0.7" fill="#9a9a9a"/><rect x="61.80" y="441.14" width="1.7" height="0.7" fill="#9a9a9a"/><rect x="62.50" y="443.95" width="1.0" height="0.7" fill="#9a9a9a"/><rect x="62.50" y="446.76" width="1.0" height="0.7" fill="#9a9a9a"/><rect x="54.8" y="90.06" width="8.9" height="0.7" fill="#626262"/><rect x="54.8" y="118.15" width="8.9" height="0.7" fill="#626262"/><rect x="54.8" y="146.24" width="8.9" height="0.7" fill="#626262"/><rect x="54.8" y="174.32" width="8.9" height="0.7" fill="#626262"/><rect x="54.8" y="202.41" width="8.9" height="0.7" fill="#626262"/><rect x="54.8" y="230.49" width="8.9" height="0.7" fill="#626262"/><rect x="54.8" y="258.58" width="8.9" height="0.7" fill="#626262"/><rect x="54.8" y="286.67" width="8.9" height="0.7" fill="#626262"/><rect x="54.8" y="314.75" width="8.9" height="0.7" fill="#626262"/><rect x="54.8" y="342.84" width="8.9" height="0.7" fill="#626262"/><rect x="54.8" y="370.92" width="8.9" height="0.7" fill="#626262"/><rect x="54.8" y="399.01" width="8.9" height="0.7" fill="#626262"/><rect x="54.8" y="427.10" width="8.9" height="0.7" fill="#626262"/></svg>
<div class="a" style="left:54.50px;top:65.70px;width:9.20px;height:10.00px;background:#494949;"></div>
<div class="a" style="left:55.20px;top:66.60px;width:7.80px;height:7.80px;background:#555;"></div>
<div class="t" style="left:71.43px;top:68.6px;font-size:6px;color:#d2d2d2;max-width:404.4px;overflow:hidden">200</div>
<div class="t" style="left:99.51px;top:68.6px;font-size:6px;color:#d2d2d2;max-width:376.3px;overflow:hidden">100</div>
<div class="t" style="left:127.60px;top:68.6px;font-size:6px;color:#d2d2d2;max-width:348.2px;overflow:hidden">0</div>
<div class="t" style="left:155.69px;top:68.6px;font-size:6px;color:#d2d2d2;max-width:320.1px;overflow:hidden">100</div>
<div class="t" style="left:183.77px;top:68.6px;font-size:6px;color:#d2d2d2;max-width:292.0px;overflow:hidden">200</div>
<div class="t" style="left:211.86px;top:68.6px;font-size:6px;color:#d2d2d2;max-width:263.9px;overflow:hidden">300</div>
<div class="t" style="left:239.94px;top:68.6px;font-size:6px;color:#d2d2d2;max-width:235.9px;overflow:hidden">400</div>
<div class="t" style="left:268.03px;top:68.6px;font-size:6px;color:#d2d2d2;max-width:207.8px;overflow:hidden">500</div>
<div class="t" style="left:296.12px;top:68.6px;font-size:6px;color:#d2d2d2;max-width:179.7px;overflow:hidden">600</div>
<div class="t" style="left:324.20px;top:68.6px;font-size:6px;color:#d2d2d2;max-width:151.6px;overflow:hidden">700</div>
<div class="t" style="left:352.29px;top:68.6px;font-size:6px;color:#d2d2d2;max-width:123.5px;overflow:hidden">800</div>
<div class="t" style="left:380.37px;top:68.6px;font-size:6px;color:#d2d2d2;max-width:95.4px;overflow:hidden">900</div>
<div class="t" style="left:408.46px;top:68.6px;font-size:6px;color:#d2d2d2;max-width:67.3px;overflow:hidden">1000</div>
<div class="t" style="left:436.55px;top:68.6px;font-size:6px;color:#d2d2d2;max-width:39.3px;overflow:hidden">1100</div>
<div class="t" style="left:464.63px;top:68.6px;font-size:6px;color:#d2d2d2;max-width:11.2px;overflow:hidden">1200</div>
<div class="a" style="left:54.5px;top:75.7px;width:9.2px;height:374.3px;overflow:hidden">
<div class="t" style="left:-0.6px;width:5px;text-align:center;top:-10.97px;font-size:6px;color:#d2d2d2">2</div>
<div class="t" style="left:-0.6px;width:5px;text-align:center;top:-5.17px;font-size:6px;color:#d2d2d2">0</div>
<div class="t" style="left:-0.6px;width:5px;text-align:center;top:0.63px;font-size:6px;color:#d2d2d2">0</div>
<div class="t" style="left:-0.6px;width:5px;text-align:center;top:17.11px;font-size:6px;color:#d2d2d2">1</div>
<div class="t" style="left:-0.6px;width:5px;text-align:center;top:22.91px;font-size:6px;color:#d2d2d2">0</div>
<div class="t" style="left:-0.6px;width:5px;text-align:center;top:28.71px;font-size:6px;color:#d2d2d2">0</div>
<div class="t" style="left:-0.6px;width:5px;text-align:center;top:45.20px;font-size:6px;color:#d2d2d2">0</div>
<div class="t" style="left:-0.6px;width:5px;text-align:center;top:73.29px;font-size:6px;color:#d2d2d2">1</div>
<div class="t" style="left:-0.6px;width:5px;text-align:center;top:79.09px;font-size:6px;color:#d2d2d2">0</div>
<div class="t" style="left:-0.6px;width:5px;text-align:center;top:84.89px;font-size:6px;color:#d2d2d2">0</div>
<div class="t" style="left:-0.6px;width:5px;text-align:center;top:101.37px;font-size:6px;color:#d2d2d2">2</div>
<div class="t" style="left:-0.6px;width:5px;text-align:center;top:107.17px;font-size:6px;color:#d2d2d2">0</div>
<div class="t" style="left:-0.6px;width:5px;text-align:center;top:112.97px;font-size:6px;color:#d2d2d2">0</div>
<div class="t" style="left:-0.6px;width:5px;text-align:center;top:129.46px;font-size:6px;color:#d2d2d2">3</div>
<div class="t" style="left:-0.6px;width:5px;text-align:center;top:135.26px;font-size:6px;color:#d2d2d2">0</div>
<div class="t" style="left:-0.6px;width:5px;text-align:center;top:141.06px;font-size:6px;color:#d2d2d2">0</div>
<div class="t" style="left:-0.6px;width:5px;text-align:center;top:157.54px;font-size:6px;color:#d2d2d2">4</div>
<div class="t" style="left:-0.6px;width:5px;text-align:center;top:163.34px;font-size:6px;color:#d2d2d2">0</div>
<div class="t" style="left:-0.6px;width:5px;text-align:center;top:169.14px;font-size:6px;color:#d2d2d2">0</div>
<div class="t" style="left:-0.6px;width:5px;text-align:center;top:185.63px;font-size:6px;color:#d2d2d2">5</div>
<div class="t" style="left:-0.6px;width:5px;text-align:center;top:191.43px;font-size:6px;color:#d2d2d2">0</div>
<div class="t" style="left:-0.6px;width:5px;text-align:center;top:197.23px;font-size:6px;color:#d2d2d2">0</div>
<div class="t" style="left:-0.6px;width:5px;text-align:center;top:213.72px;font-size:6px;color:#d2d2d2">6</div>
<div class="t" style="left:-0.6px;width:5px;text-align:center;top:219.52px;font-size:6px;color:#d2d2d2">0</div>
<div class="t" style="left:-0.6px;width:5px;text-align:center;top:225.32px;font-size:6px;color:#d2d2d2">0</div>
<div class="t" style="left:-0.6px;width:5px;text-align:center;top:241.80px;font-size:6px;color:#d2d2d2">7</div>
<div class="t" style="left:-0.6px;width:5px;text-align:center;top:247.60px;font-size:6px;color:#d2d2d2">0</div>
<div class="t" style="left:-0.6px;width:5px;text-align:center;top:253.40px;font-size:6px;color:#d2d2d2">0</div>
<div class="t" style="left:-0.6px;width:5px;text-align:center;top:269.89px;font-size:6px;color:#d2d2d2">8</div>
<div class="t" style="left:-0.6px;width:5px;text-align:center;top:275.69px;font-size:6px;color:#d2d2d2">0</div>
<div class="t" style="left:-0.6px;width:5px;text-align:center;top:281.49px;font-size:6px;color:#d2d2d2">0</div>
<div class="t" style="left:-0.6px;width:5px;text-align:center;top:297.97px;font-size:6px;color:#d2d2d2">9</div>
<div class="t" style="left:-0.6px;width:5px;text-align:center;top:303.77px;font-size:6px;color:#d2d2d2">0</div>
<div class="t" style="left:-0.6px;width:5px;text-align:center;top:309.57px;font-size:6px;color:#d2d2d2">0</div>
<div class="t" style="left:-0.6px;width:5px;text-align:center;top:326.06px;font-size:6px;color:#d2d2d2">1</div>
<div class="t" style="left:-0.6px;width:5px;text-align:center;top:331.86px;font-size:6px;color:#d2d2d2">0</div>
<div class="t" style="left:-0.6px;width:5px;text-align:center;top:337.66px;font-size:6px;color:#d2d2d2">0</div>
<div class="t" style="left:-0.6px;width:5px;text-align:center;top:343.46px;font-size:6px;color:#d2d2d2">0</div>
<div class="t" style="left:-0.6px;width:5px;text-align:center;top:354.15px;font-size:6px;color:#d2d2d2">1</div>
<div class="t" style="left:-0.6px;width:5px;text-align:center;top:359.95px;font-size:6px;color:#d2d2d2">1</div>
<div class="t" style="left:-0.6px;width:5px;text-align:center;top:365.75px;font-size:6px;color:#d2d2d2">0</div>
<div class="t" style="left:-0.6px;width:5px;text-align:center;top:371.55px;font-size:6px;color:#d2d2d2">0</div>
<div class="t" style="left:-0.6px;width:5px;text-align:center;top:382.23px;font-size:6px;color:#d2d2d2">1</div>
<div class="t" style="left:-0.6px;width:5px;text-align:center;top:388.03px;font-size:6px;color:#d2d2d2">2</div>
<div class="t" style="left:-0.6px;width:5px;text-align:center;top:393.83px;font-size:6px;color:#d2d2d2">0</div>
<div class="t" style="left:-0.6px;width:5px;text-align:center;top:399.63px;font-size:6px;color:#d2d2d2">0</div>
</div>
<!-- ELF -->
<svg width="0" height="0" style="position:absolute">
<defs>
<linearGradient id="gFace" gradientUnits="userSpaceOnUse" x1="0" y1="190" x2="0" y2="364"><stop offset="0" stop-color="#ffdb62"/><stop offset="0.45" stop-color="#ffd45a"/><stop offset="1" stop-color="#fdc349"/></linearGradient><radialGradient id="gFaceEdge" gradientUnits="userSpaceOnUse" cx="270.5" cy="263.3" r="100.5"><stop offset="0.9" stop-color="#fbb03a" stop-opacity="0"/><stop offset="0.94" stop-color="#fbb03a" stop-opacity="0.22"/><stop offset="1" stop-color="#fbb03a" stop-opacity="0.32"/></radialGradient><linearGradient id="gFaceHi" gradientUnits="userSpaceOnUse" x1="0" y1="240" x2="0" y2="364"><stop offset="0" stop-color="#ffdc70" stop-opacity="0"/><stop offset="1" stop-color="#ffdc70" stop-opacity="0.95"/></linearGradient>
<radialGradient id="gRim" gradientUnits="userSpaceOnUse" cx="268.9" cy="263.4" r="113.8"><stop offset="0.86" stop-color="#fdbb41"/><stop offset="0.94" stop-color="#fbae37"/><stop offset="0.98" stop-color="#f69d2a"/><stop offset="1" stop-color="#ec881d"/></radialGradient>
<linearGradient id="gEarL" gradientUnits="userSpaceOnUse" x1="130" y1="214" x2="158" y2="285"><stop offset="0" stop-color="#f4982a"/><stop offset="0.4" stop-color="#fbb03b"/><stop offset="1" stop-color="#fdbc45"/></linearGradient>
<linearGradient id="gEarIn" gradientUnits="userSpaceOnUse" x1="149" y1="0" x2="158" y2="0"><stop offset="0" stop-color="#f9a834"/><stop offset="1" stop-color="#fdbd46"/></linearGradient><linearGradient id="gRimV" gradientUnits="userSpaceOnUse" x1="0" y1="290" x2="0" y2="377"><stop offset="0" stop-color="#f28f20" stop-opacity="0"/><stop offset="1" stop-color="#f28f20" stop-opacity="0.55"/></linearGradient><radialGradient id="gHat" gradientUnits="userSpaceOnUse" cx="264" cy="205" r="125"><stop offset="0" stop-color="#56a052"/><stop offset="0.55" stop-color="#489246"/><stop offset="0.85" stop-color="#357f39"/><stop offset="0.97" stop-color="#246829"/><stop offset="1" stop-color="#1c5a22"/></radialGradient>
<linearGradient id="gTail" gradientUnits="userSpaceOnUse" x1="338" y1="0" x2="392" y2="0"><stop offset="0" stop-color="#266a2b"/><stop offset="0.4" stop-color="#489346"/><stop offset="0.8" stop-color="#3f8b3f"/><stop offset="0.96" stop-color="#256a2a"/><stop offset="1" stop-color="#1c5a22"/></linearGradient>
<linearGradient id="gBrim" gradientUnits="userSpaceOnUse" x1="0" y1="160" x2="0" y2="221">
<stop offset="0" stop-color="#dadada"/><stop offset="0.3" stop-color="#ebebeb"/><stop offset="0.7" stop-color="#dddddd"/><stop offset="1" stop-color="#bdbdbd"/></linearGradient>
<linearGradient id="gBrimX" gradientUnits="userSpaceOnUse" x1="160" y1="0" x2="378" y2="0"><stop offset="0" stop-color="#000" stop-opacity="0.12"/><stop offset="0.04" stop-color="#000" stop-opacity="0.03"/><stop offset="0.5" stop-color="#fff" stop-opacity="0.12"/><stop offset="0.95" stop-color="#000" stop-opacity="0.04"/><stop offset="1" stop-color="#000" stop-opacity="0.2"/></linearGradient>
<radialGradient id="gPom" gradientUnits="userSpaceOnUse" cx="361" cy="367" r="35.5"><stop offset="0" stop-color="#f1f1f1"/><stop offset="0.6" stop-color="#e4e4e4"/><stop offset="0.85" stop-color="#cbcbcb"/><stop offset="0.96" stop-color="#a6a6a6"/><stop offset="1" stop-color="#8c8c8c"/></radialGradient>
<pattern id="pTex" width="2.6" height="2.6" patternUnits="userSpaceOnUse"><rect width="1.05" height="1.05" fill="#06300c" opacity="0.3"/><rect x="1.3" y="1.3" width="1.05" height="1.05" fill="#06300c" opacity="0.3"/></pattern>
<filter id="fNoise" x="0" y="0" width="100%" height="100%"><feTurbulence type="fractalNoise" baseFrequency="0.85" numOctaves="2" seed="3"/><feColorMatrix values="0 0 0 0 0.4  0 0 0 0 0.4  0 0 0 0 0.4  1.1 0 0 0 -0.4"/><feComposite in2="SourceGraphic" operator="in"/></filter>
<clipPath id="cFace"><circle cx="268.9" cy="263.4" r="113.8"/></clipPath>
<path id="tailp" d="M350,180 C372,188 386,212 389.5,240 C391.5,262 391,282 389.4,300 C388,318 385.5,334 382.8,347 L380.2,358 C377,371.5 371,378.4 363,378.4 C355,378.4 350,372.5 347,365.5 L339,345 L300,300 Z"/>
<path id="earp" d="M129.2,212.2 L159.4,228.8 L166,232 L172,300 L159.4,296.7 C152,294.5 148,292 145.5,289.3 C141,285 138,281 136.2,276.3 C133.5,270 132,265 131.5,259.5 C130.3,252 130,245 130,237.2 C129.7,228 129.5,220 129.2,212.2 Z"/>
<path id="domep" d="M164.1,190 A116,116 0 0 1 374.9,190 Z"/>
<path id="brimp" d="M160.5,189 Q160.5,185.2 163.5,183.6 A150,84.1 0 0 1 375,183.6 Q378,185.2 378,189 L378,217.5 Q378,221.8 373.5,219.2 A150,97.2 0 0 0 165,219.2 Q160.5,221.8 160.5,217.5 Z"/>
<symbol id="elf" viewBox="126 118.5 287.6 288" overflow="hidden">
<rect x="126" y="118.5" width="288" height="288" fill="#fff"/>
<circle cx="363" cy="370" r="32.5" fill="url(#gPom)"/>
<circle cx="363" cy="370" r="32.5" fill="#888" filter="url(#fNoise)" opacity="0.5"/>
<use href="#tailp" fill="url(#gTail)"/>
<use href="#tailp" fill="url(#pTex)"/>
<g id="earL"><use href="#earp" fill="url(#gEarL)" stroke="#ec891e" stroke-width="0.9"/><path d="M131.4,216.5 C131.6,236 131.8,252 133.6,262 C135.5,272 139,280 146,287.5" fill="none" stroke="#fec04c" stroke-width="1.6" opacity="0.55"/><path d="M149.6,223.6 C148,245 148.6,270 155,292.5 L164,298 L164,231 Z" fill="url(#gEarIn)"/><path d="M149.6,223.6 C148,245 148.6,270 155,292.5" fill="none" stroke="#f19a2c" stroke-width="0.7" opacity="0.85"/></g>
<use href="#earL" transform="translate(538.4,0) scale(-1,1)"/>
<circle cx="268.9" cy="263.4" r="113.8" fill="url(#gRim)"/><circle cx="268.9" cy="263.4" r="113.8" fill="url(#gRimV)"/>
<circle cx="270.5" cy="263.3" r="100.5" fill="url(#gFace)"/><circle cx="270.5" cy="263.3" r="100.5" fill="url(#gFaceEdge)"/><circle cx="270.5" cy="263.3" r="100.2" fill="none" stroke="url(#gFaceHi)" stroke-width="1.1"/>
<!-- brim shadow on face -->
<g clip-path="url(#cFace)"><use href="#brimp" transform="translate(0,2.2)" fill="#f8a029" opacity="0.8"/></g>
<use href="#domep" fill="url(#gHat)"/>
<use href="#domep" fill="url(#pTex)"/>
<g><use href="#brimp" fill="url(#gBrim)"/><use href="#brimp" fill="url(#gBrimX)"/><use href="#brimp" fill="#777" filter="url(#fNoise)" opacity="0.5"/><path d="M160.5,217.5 V189 Q160.5,185.2 163.5,183.6 A150,84.1 0 0 1 375,183.6 Q378,185.2 378,189 V217.5" fill="none" stroke="#a0a0a0" stroke-width="1"/><path d="M373.5,219.2 A150,97.2 0 0 0 165,219.2" fill="none" stroke="#8f959d" stroke-width="1.3"/></g>
</symbol>
</defs></svg>
<div class="a" style="left:125.5px;top:118px;width:288.6px;height:289px;background:#161616"></div>
<svg class="a" style="left:126px;top:118.5px" width="287.6" height="288"><use href="#elf"/></svg>

<div class="a" style="left:54.50px;top:450.40px;width:431.30px;height:10.00px;background:#525252;"></div>
<div class="a" style="left:190.50px;top:450.40px;width:285.20px;height:10.20px;background:#4a4a4a;"></div>
<div class="a" style="left:54.50px;top:450.10px;width:431.30px;height:0.60px;background:#3c3c3c;"></div>
<div class="a" style="left:54.50px;top:450.40px;width:33.00px;height:10.20px;background:#474747;"></div>
<div class="t" style="left:64.50px;top:452.14px;font-size:6px;color:#ececec;">100%</div>
<div class="t" style="left:111.00px;top:452.14px;font-size:6px;color:#ececec;">Doc: 3,00M/18,0M</div>
<svg class="a" style="left:183.60px;top:452.60px;" width="6" height="6" viewBox="-3 -3 6 6"><path d="M-1,-2.3 L1.2,0 L-1,2.3" fill="none" stroke="#e0e0e0" stroke-width="0.9"/></svg>
<div class="a" style="left:485.30px;top:49.20px;width:183.20px;height:496.50px;background:#3a3a3a;"></div>
<div class="a" style="left:485.30px;top:49.20px;width:183.20px;height:6.60px;background:#404040;"></div>
<svg class="a" style="left:499.00px;top:49.80px;" width="6" height="6" viewBox="-3 -3 6 6"><path d="M2.2,-1.6 L0.7,0 L2.2,1.6 M-0.4,-1.6 L-1.9,0 L-0.4,1.6" fill="none" stroke="#d0d0d0" stroke-width="0.85"/></svg>
<svg class="a" style="left:659.20px;top:49.80px;" width="6" height="6" viewBox="-3 -3 6 6"><path d="M-2.2,-1.6 L-0.7,0 L-2.2,1.6 M0.4,-1.6 L1.9,0 L0.4,1.6" fill="none" stroke="#d0d0d0" stroke-width="0.85"/></svg>
<div class="a" style="left:487.00px;top:55.90px;width:19.80px;height:22.60px;background:#535353;"></div>
<div class="a" style="left:491.70px;top:57.90px;width:10.60px;height:0.80px;background:#464646;"></div>
<div class="a" style="left:487.00px;top:80.40px;width:19.80px;height:20.90px;background:#535353;"></div>
<div class="a" style="left:491.70px;top:82.40px;width:10.60px;height:0.80px;background:#464646;"></div>
<div class="a" style="left:487.00px;top:103.20px;width:19.80px;height:37.30px;background:#535353;"></div>
<div class="a" style="left:491.70px;top:105.20px;width:10.60px;height:0.80px;background:#464646;"></div>
<div class="a" style="left:487.00px;top:142.40px;width:19.80px;height:21.50px;background:#535353;"></div>
<div class="a" style="left:491.70px;top:144.40px;width:10.60px;height:0.80px;background:#464646;"></div>
<div class="a" style="left:487.00px;top:165.80px;width:19.80px;height:379.90px;background:#535353;"></div>
<div class="a" style="left:491.70px;top:167.80px;width:10.60px;height:0.80px;background:#464646;"></div>
<svg class="a" style="left:491.20px;top:63.30px;" width="12" height="12" viewBox="-6 -6 12 12"><rect x="-4.3" y="-4.6" width="2.6" height="2.5" rx="0.5" class="s" style="stroke-width:0.8"/><rect x="-4.3" y="-1.5" width="2.6" height="2.5" rx="0.5" class="s" style="stroke-width:0.8"/><rect x="-4.7" y="1.5" width="3.4" height="3.3" rx="0.5" class="f"/><path d="M0.8,-3.2 C4,-3.4 4.6,0.8 1.2,2.8" class="s" style="stroke-width:1.4"/><path d="M-0.4,-5 L-0.2,-1.4 L2.6,-3.6 Z" class="f"/></svg>
<svg class="a" style="left:491.20px;top:87.10px;" width="12" height="12" viewBox="-6 -6 12 12"><circle r="4.4" class="s" style="stroke-width:1.05"/><path d="M0,-0.8 V2.5" class="s" style="stroke-width:1.2"/><circle cy="-2.5" r="0.75" class="f"/></svg>
<svg class="a" style="left:491.20px;top:110.10px;" width="12" height="12" viewBox="-6 -6 12 12"><path d="M-2.3,0.4 H2.7 L2.2,4.8 H-1.8 Z" class="f"/><path d="M-1.6,-0.2 L-3.4,-3.6 M0.2,-0.2 V-4.6 M1.9,-0.2 L3.7,-3.4" class="s" style="stroke-width:1.4"/><path d="M-0.8,2.4 H1.4" stroke="#535353" stroke-width="0.8"/></svg>
<svg class="a" style="left:491.20px;top:125.30px;" width="12" height="12" viewBox="-6 -6 12 12"><path d="M-4.8,-2.1 H3 M-4.8,1.9 H0" class="s" style="stroke-width:1.3"/><rect x="-1.8" y="-3.7" width="1.9" height="3.2" class="f"/><path d="M0,1.9 L3.2,-0.4 C5,0.2 5,3.6 3.2,4.2 Z" class="f"/></svg>
<div class="t" style="left:492.20px;top:149.21px;font-size:9.8px;color:#e8e8e8;-webkit-text-stroke:0.2px #e8e8e8">A</div>
<div class="a" style="left:499.90px;top:149.60px;width:0.90px;height:9.80px;background:#e8e8e8;"></div>
<div class="a" style="left:508.80px;top:55.90px;width:159.70px;height:141.00px;background:#535353;"></div>
<div class="a" style="left:508.80px;top:55.90px;width:159.70px;height:15.60px;background:#444444;"></div>
<div class="a" style="left:508.80px;top:55.90px;width:37.20px;height:16.20px;background:#535353;"></div>
<div class="a" style="left:546.60px;top:55.90px;width:39.00px;height:15.40px;background:#4a4a4a;"></div>
<div class="t b" style="left:514.10px;top:61.21px;font-size:6.05px;color:#ececec;">Navigator</div>
<div class="t" style="left:551.70px;top:61.21px;font-size:6.05px;color:#d6d6d6;letter-spacing:0.2px">Histogram</div>
<div class="a" style="left:659.00px;top:61.90px;width:6.00px;height:4.60px;background:#767676;"></div>
<div class="a" style="left:659.00px;top:65.40px;width:6.00px;height:1.00px;background:#a4a4a4;"></div>
<div class="a" style="left:536.4px;top:75.0px;width:104.2px;height:105.2px;border:0.9px solid #d2463d;background:#fff"></div>
<svg class="a" style="left:536.9px;top:75.5px" width="103.2" height="104.2" ><use href="#elf"/></svg>
<div class="a" style="left:508.80px;top:183.10px;width:159.70px;height:0.70px;background:#474747;"></div>
<div class="a" style="left:510.20px;top:185.60px;width:29.60px;height:8.80px;background:#474747;border-radius:1px"></div>
<div class="t" style="left:511.40px;top:186.74px;font-size:6px;color:#ececec;">100%</div>
<svg class="a" style="left:541.60px;top:184.80px;" width="12" height="12" viewBox="-6 -6 12 12"><path d="M-3.128,1.4960000000000002 L-1.088,-0.952 L-0.272,-0.136 L0.8160000000000001,-1.6320000000000001 L3.2640000000000002,1.4960000000000002 Z" fill="#d6d6d6"/></svg>
<div class="a" style="left:559.00px;top:188.00px;width:80.00px;height:1.40px;background:#747474;"></div>
<svg class="a" style="left:593.40px;top:186.80px;" width="10" height="10" viewBox="-5 -5 10 10"><path d="M0,-3.7 L3.9,3.2 H-3.9 Z" fill="#f6f6f6" stroke="#2a2a2a" stroke-width="0.8" stroke-linejoin="round"/></svg>
<svg class="a" style="left:644.60px;top:184.00px;" width="12" height="12" viewBox="-6 -6 12 12"><path d="M-4.968,2.3760000000000003 L-1.7280000000000002,-1.512 L-0.43200000000000005,-0.21600000000000003 L1.296,-2.592 L5.184,2.3760000000000003 Z" fill="#d6d6d6"/></svg>
<div class="a" style="left:508.80px;top:196.70px;width:159.70px;height:2.00px;background:#3a3a3a;"></div>
<div class="a" style="left:508.80px;top:198.60px;width:159.70px;height:74.00px;background:#535353;"></div>
<div class="a" style="left:508.80px;top:198.60px;width:159.70px;height:15.30px;background:#444444;"></div>
<div class="a" style="left:508.80px;top:198.60px;width:25.60px;height:15.60px;background:#535353;"></div>
<div class="a" style="left:535.00px;top:198.60px;width:35.40px;height:14.80px;background:#4a4a4a;"></div>
<div class="a" style="left:571.00px;top:198.60px;width:46.60px;height:14.80px;background:#4a4a4a;"></div>
<div class="t b" style="left:513.60px;top:203.41px;font-size:6.05px;color:#ececec;">Color</div>
<div class="t" style="left:539.00px;top:203.41px;font-size:6.05px;color:#d6d6d6;">Swatches</div>
<div class="t" style="left:576.00px;top:203.41px;font-size:6.05px;color:#d6d6d6;letter-spacing:0.3px">Adjustments</div>
<div class="a" style="left:659.00px;top:204.00px;width:6.00px;height:4.60px;background:#767676;"></div>
<div class="a" style="left:659.00px;top:207.50px;width:6.00px;height:1.00px;background:#a4a4a4;"></div>
<div class="a" style="left:519.60px;top:225.40px;width:9.60px;height:9.60px;background:#000;border:0.6px solid #cfcfcf;box-shadow:0 0 0 0.5px #3a3a3a"></div>
<div class="a" style="left:514.40px;top:220.20px;width:9.80px;height:9.80px;background:#cdeedd;border:0.6px solid #ededed;box-shadow:0 0 0 0.6px #3a3a3a"></div>
<div class="a" style="left:534px;top:218.3px;width:104.9px;height:50.4px;background:linear-gradient(to bottom,rgba(0,0,0,0) 0%,rgba(0,0,0,0.16) 25%,rgba(0,0,0,0.4) 50%,rgba(0,0,0,0.72) 75%,#000 100%),linear-gradient(to right,#fff,#45e690)"></div>
<svg class="a" style="left:543.60px;top:218.30px;" width="8" height="8" viewBox="-4 -4 8 8"><circle r="2.6" fill="none" stroke="#111" stroke-width="0.8"/></svg>
<div class="a" style="left:648.6px;top:218.3px;width:10.6px;height:50.4px;background:linear-gradient(to bottom,#ff0022 0%,#ff00d8 14%,#a000ff 24%,#0018ff 38%,#00b4ff 50%,#00f090 60%,#20e000 70%,#d8f000 82%,#ffc000 90%,#ff2000 100%)"></div>
<svg class="a" style="left:640.90px;top:243.00px;" width="8" height="8" viewBox="-4 -4 8 8"><path d="M-2,-2.6 L2.2,0 L-2,2.6 Z" fill="#f4f4f4" stroke="#2a2a2a" stroke-width="0.7" stroke-linejoin="round"/></svg>
<div class="a" style="left:508.80px;top:272.60px;width:159.70px;height:1.40px;background:#3a3a3a;"></div>
<div class="a" style="left:508.80px;top:273.80px;width:159.70px;height:271.90px;background:#535353;"></div>
<div class="a" style="left:508.80px;top:273.80px;width:159.70px;height:16.20px;background:#444444;"></div>
<div class="a" style="left:508.80px;top:273.80px;width:28.40px;height:16.50px;background:#535353;"></div>
<div class="a" style="left:537.80px;top:273.80px;width:35.60px;height:15.60px;background:#4a4a4a;"></div>
<div class="a" style="left:574.00px;top:273.80px;width:25.20px;height:15.60px;background:#4a4a4a;"></div>
<div class="t b" style="left:514.00px;top:278.81px;font-size:6.05px;color:#ececec;">Layers</div>
<div class="t" style="left:542.60px;top:278.81px;font-size:6.05px;color:#d6d6d6;">Channels</div>
<div class="t" style="left:579.00px;top:278.81px;font-size:6.05px;color:#d6d6d6;">Paths</div>
<div class="a" style="left:659.00px;top:279.20px;width:6.00px;height:4.60px;background:#767676;"></div>
<div class="a" style="left:659.00px;top:282.70px;width:6.00px;height:1.00px;background:#a4a4a4;"></div>
<div class="a" style="left:511.00px;top:294.30px;width:50.30px;height:10.40px;background:#464646;border:0.6px solid #686868;border-radius:1.5px"></div>
<svg class="a" style="left:514.40px;top:295.50px;" width="8" height="8" viewBox="-4 -4 8 8"><circle cx="0.8" cy="-0.8" r="1.9" class="s" style="stroke-width:0.8"/><path d="M-0.6,0.6 L-2.6,2.6" class="s" style="stroke-width:1"/></svg>
<div class="t" style="left:523.20px;top:296.31px;font-size:6.05px;color:#ececec;">Kind</div>
<svg class="a" style="left:553.20px;top:296.00px;" width="8" height="8" viewBox="-4 -4 8 8"><path d="M-1.8,-0.6 L0,0.8999999999999999 L1.8,-0.6" fill="none" stroke="#cfcfcf" stroke-width="0.8" stroke-linecap="round" stroke-linejoin="round"/></svg>
<svg class="a" style="left:565.60px;top:294.60px;" width="10" height="10" viewBox="-5 -5 10 10"><rect x="-3.6" y="-2.8" width="7.2" height="5.6" rx="0.7" class="s" style="stroke-width:0.9"/><path d="M-2.8,2 L-0.8,-0.4 L0.6,1 L1.6,0 L2.8,2 Z" class="f"/></svg>
<svg class="a" style="left:578.90px;top:294.60px;" width="10" height="10" viewBox="-5 -5 10 10"><circle r="3.1" class="s" style="stroke-width:0.9"/><path d="M-2.2,2.2 A3.1,3.1 0 0 1 2.2,-2.2 Z" class="f"/></svg>
<svg class="a" style="left:592.30px;top:294.60px;" width="10" height="10" viewBox="-5 -5 10 10"><path d="M-3,-3.2 H3 V-1.6 H2.4 L2,-2.4 H0.7 V2.4 L1.5,2.7 V3.2 H-1.5 V2.7 L-0.7,2.4 V-2.4 H-2 L-2.4,-1.6 H-3 Z" class="f"/></svg>
<svg class="a" style="left:605.60px;top:294.60px;" width="10" height="10" viewBox="-5 -5 10 10"><rect x="-2.6" y="-2.6" width="5.2" height="5.2" class="s" style="stroke-width:0.8"/><rect x="-3.6" y="-3.6" width="2" height="2" class="f"/><rect x="1.6" y="-3.6" width="2" height="2" class="f"/><rect x="-3.6" y="1.6" width="2" height="2" class="f"/><rect x="1.6" y="1.6" width="2" height="2" class="f"/></svg>
<svg class="a" style="left:619.50px;top:294.60px;" width="10" height="10" viewBox="-5 -5 10 10"><path d="M-2.8,-3.4 H0.8 L3,-1.2 V3.4 H-2.8 Z" class="f"/><rect x="-0.2" y="0" width="3.4" height="3.4" fill="#535353"/><rect x="0.6" y="0.8" width="2.6" height="2.6" class="f"/></svg>
<div class="a" style="left:635.10px;top:294.60px;width:4.60px;height:10.00px;background:#3c3c3c;border-radius:2.3px"></div>
<div class="a" style="left:635.30px;top:294.70px;width:4.20px;height:4.20px;background:#ececec;border-radius:50%"></div>
<div class="a" style="left:508.80px;top:307.40px;width:159.70px;height:0.60px;background:#4a4a4a;"></div>
<div class="a" style="left:511.00px;top:310.00px;width:74.10px;height:9.80px;background:#505050;border:0.6px solid #5b5b5b;border-radius:1.5px"></div>
<div class="t" style="left:514.40px;top:311.61px;font-size:6.05px;color:#8c8c8c;">Pass Through</div>
<svg class="a" style="left:577.40px;top:311.20px;" width="8" height="8" viewBox="-4 -4 8 8"><path d="M-1.8,-0.6 L0,0.8999999999999999 L1.8,-0.6" fill="none" stroke="#808080" stroke-width="0.8" stroke-linecap="round" stroke-linejoin="round"/></svg>
<div class="t" style="left:587.60px;top:311.61px;font-size:6.05px;color:#8c8c8c;">Opacity:</div>
<div class="a" style="left:611.80px;top:310.00px;width:19.60px;height:9.80px;background:#505050;border:0.6px solid #5b5b5b;border-radius:1.5px 0 0 1.5px"></div>
<div class="t" style="left:614.40px;top:311.61px;font-size:6.05px;color:#747474;">100%</div>
<div class="a" style="left:631.30px;top:310.00px;width:8.00px;height:9.80px;background:#505050;border:0.6px solid #5b5b5b;border-left:none;border-radius:0 1.5px 1.5px 0"></div>
<svg class="a" style="left:631.30px;top:311.20px;" width="8" height="8" viewBox="-4 -4 8 8"><path d="M-1.6,-0.55 L0,0.8500000000000001 L1.6,-0.55" fill="none" stroke="#808080" stroke-width="0.8" stroke-linecap="round" stroke-linejoin="round"/></svg>
<div class="a" style="left:508.80px;top:322.50px;width:159.70px;height:0.60px;background:#4a4a4a;"></div>
<div class="t" style="left:511.80px;top:326.71px;font-size:6.05px;color:#8c8c8c;">Lock:</div>
<svg class="a" style="left:527.90px;top:325.00px;" width="10" height="10" viewBox="-5 -5 10 10"><rect x="-3" y="-3" width="6" height="6" rx="0.6" class="s" style="stroke-width:0.8"/><rect x="-2" y="-2" width="2" height="2" class="f"/><rect x="0" y="0" width="2" height="2" class="f"/></svg>
<svg class="a" style="left:540.80px;top:325.00px;" width="10" height="10" viewBox="-5 -5 10 10"><path d="M3.2,-3.4 L0,0.6" class="s" style="stroke-width:1.3"/><path d="M-0.4,0.4 C-1.8,0.6 -2,1.8 -2,2.6 C-2.2,3.2 -3,3.4 -3.4,3.4 C-1.6,3.8 0.2,3.2 0.7,1.5 Z" class="f"/></svg>
<svg class="a" style="left:552.70px;top:325.00px;" width="10" height="10" viewBox="-5 -5 10 10"><path d="M0,-3.6 L1.2,-2.2 H-1.2 Z M0,3.6 L1.2,2.2 H-1.2 Z M-3.6,0 L-2.2,-1.2 V1.2 Z M3.6,0 L2.2,-1.2 V1.2 Z" class="f"/><path d="M0,-2.4 V2.4 M-2.4,0 H2.4" class="s" style="stroke-width:0.8"/></svg>
<svg class="a" style="left:564.80px;top:325.00px;" width="10" height="10" viewBox="-5 -5 10 10"><path d="M-3.6,-1.8 H2 V3.4 M-1.8,-3.6 V1.8 H3.6" class="s" style="stroke-width:0.8;stroke-linecap:butt"/><path d="M1,-3.4 L3.4,-1" class="s" style="stroke-width:0.7"/></svg>
<svg class="a" style="left:577.20px;top:325.00px;" width="10" height="10" viewBox="-5 -5 10 10"><rect x="-2.6" y="-0.6" width="5.2" height="4" rx="0.5" class="f"/><path d="M-1.5,-0.6 V-1.8 A1.5,1.5 0 0 1 1.5,-1.8 V-0.6" class="s" style="stroke-width:0.9"/></svg>
<div class="t" style="left:600.90px;top:326.71px;font-size:6.05px;color:#8c8c8c;">Fill:</div>
<div class="a" style="left:611.80px;top:325.20px;width:19.60px;height:9.80px;background:#505050;border:0.6px solid #5b5b5b;border-radius:1.5px 0 0 1.5px"></div>
<div class="t" style="left:614.40px;top:326.71px;font-size:6.05px;color:#747474;">100%</div>
<div class="a" style="left:631.30px;top:325.20px;width:8.00px;height:9.80px;background:#505050;border:0.6px solid #5b5b5b;border-left:none;border-radius:0 1.5px 1.5px 0"></div>
<svg class="a" style="left:631.30px;top:326.30px;" width="8" height="8" viewBox="-4 -4 8 8"><path d="M-1.6,-0.55 L0,0.8500000000000001 L1.6,-0.55" fill="none" stroke="#808080" stroke-width="0.8" stroke-linecap="round" stroke-linejoin="round"/></svg>
<div class="a" style="left:508.80px;top:338.10px;width:150.60px;height:0.70px;background:#404040;"></div>
<div class="a" style="left:659.40px;top:338.10px;width:9.10px;height:193.60px;background:#4a4a4a;"></div>
<div class="a" style="left:525.60px;top:338.70px;width:133.80px;height:12.92px;background:#535353;"></div>
<div class="a" style="left:508.80px;top:338.70px;width:16.80px;height:12.92px;background:#5d8c3a;"></div>
<div class="a" style="left:508.80px;top:351.02px;width:150.60px;height:0.60px;background:#454545;"></div>
<div class="a" style="left:525.40px;top:338.70px;width:0.60px;height:12.92px;background:#454545;"></div>
<svg class="a" style="left:512.20px;top:339.96px;" width="10" height="10" viewBox="-5 -5 10 10"><path d="M-3.6,0 C-2.2,-2.6 2.2,-2.6 3.6,0 C2.2,2.6 -2.2,2.6 -3.6,0 Z" fill="#f4f4f4"/><circle r="1.25" fill="#333"/><circle r="0.5" cx="0" cy="0" fill="#333"/></svg>
<svg class="a" style="left:525.40px;top:340.96px;" width="8" height="8" viewBox="-4 -4 8 8"><path d="M-1,-2.4 L1.2,0 L-1,2.4" fill="none" stroke="#d6d6d6" stroke-width="0.8" stroke-linecap="round" stroke-linejoin="round"/></svg>
<svg class="a" style="left:534.00px;top:339.96px;" width="10" height="10" viewBox="-5 -5 10 10"><path d="M-4.2,-3 H-1.2 L-0.2,-1.9 H4.2 V3.2 H-4.2 Z" fill="#e6e6e6"/><path d="M-4.2,-1.2 H4.2" stroke="#535353" stroke-width="0.5"/></svg>
<div class="t" style="left:548.80px;top:342.24px;font-size:6.02px;color:#f0f0f0;">Hat</div>
<div class="a" style="left:525.60px;top:351.62px;width:133.80px;height:12.92px;background:#535353;"></div>
<div class="a" style="left:508.80px;top:351.62px;width:16.80px;height:12.92px;background:#b0901c;"></div>
<div class="a" style="left:508.80px;top:363.94px;width:150.60px;height:0.60px;background:#454545;"></div>
<div class="a" style="left:525.40px;top:351.62px;width:0.60px;height:12.92px;background:#454545;"></div>
<div class="a" style="left:513.40px;top:354.22px;width:7.60px;height:7.60px;background:transparent;border:0.6px solid rgba(60,45,0,0.16);border-radius:1px"></div>
<svg class="a" style="left:525.40px;top:353.88px;" width="8" height="8" viewBox="-4 -4 8 8"><path d="M-1,-2.4 L1.2,0 L-1,2.4" fill="none" stroke="#d6d6d6" stroke-width="0.8" stroke-linecap="round" stroke-linejoin="round"/></svg>
<svg class="a" style="left:534.00px;top:352.88px;" width="10" height="10" viewBox="-5 -5 10 10"><path d="M-4.2,-3 H-1.2 L-0.2,-1.9 H4.2 V3.2 H-4.2 Z" fill="#e6e6e6"/><path d="M-4.2,-1.2 H4.2" stroke="#535353" stroke-width="0.5"/></svg>
<div class="t" style="left:548.80px;top:355.16px;font-size:6.02px;color:#f0f0f0;">Eyes - Closed Up</div>
<div class="a" style="left:525.60px;top:364.54px;width:133.80px;height:12.92px;background:#535353;"></div>
<div class="a" style="left:508.80px;top:364.54px;width:16.80px;height:12.92px;background:#b0901c;"></div>
<div class="a" style="left:508.80px;top:376.86px;width:150.60px;height:0.60px;background:#454545;"></div>
<div class="a" style="left:525.40px;top:364.54px;width:0.60px;height:12.92px;background:#454545;"></div>
<div class="a" style="left:513.40px;top:367.14px;width:7.60px;height:7.60px;background:transparent;border:0.6px solid rgba(60,45,0,0.16);border-radius:1px"></div>
<svg class="a" style="left:525.40px;top:366.80px;" width="8" height="8" viewBox="-4 -4 8 8"><path d="M-1,-2.4 L1.2,0 L-1,2.4" fill="none" stroke="#d6d6d6" stroke-width="0.8" stroke-linecap="round" stroke-linejoin="round"/></svg>
<svg class="a" style="left:534.00px;top:365.80px;" width="10" height="10" viewBox="-5 -5 10 10"><path d="M-4.2,-3 H-1.2 L-0.2,-1.9 H4.2 V3.2 H-4.2 Z" fill="#e6e6e6"/><path d="M-4.2,-1.2 H4.2" stroke="#535353" stroke-width="0.5"/></svg>
<div class="t" style="left:548.80px;top:368.08px;font-size:6.02px;color:#f0f0f0;">Eyes - Closed Down</div>
<div class="a" style="left:525.60px;top:377.46px;width:133.80px;height:12.92px;background:#535353;"></div>
<div class="a" style="left:508.80px;top:377.46px;width:16.80px;height:12.92px;background:#b0901c;"></div>
<div class="a" style="left:508.80px;top:389.78px;width:150.60px;height:0.60px;background:#454545;"></div>
<div class="a" style="left:525.40px;top:377.46px;width:0.60px;height:12.92px;background:#454545;"></div>
<div class="a" style="left:513.40px;top:380.06px;width:7.60px;height:7.60px;background:transparent;border:0.6px solid rgba(60,45,0,0.16);border-radius:1px"></div>
<svg class="a" style="left:525.40px;top:379.72px;" width="8" height="8" viewBox="-4 -4 8 8"><path d="M-1,-2.4 L1.2,0 L-1,2.4" fill="none" stroke="#d6d6d6" stroke-width="0.8" stroke-linecap="round" stroke-linejoin="round"/></svg>
<svg class="a" style="left:534.00px;top:378.72px;" width="10" height="10" viewBox="-5 -5 10 10"><path d="M-4.2,-3 H-1.2 L-0.2,-1.9 H4.2 V3.2 H-4.2 Z" fill="#e6e6e6"/><path d="M-4.2,-1.2 H4.2" stroke="#535353" stroke-width="0.5"/></svg>
<div class="t" style="left:548.80px;top:381.00px;font-size:6.02px;color:#f0f0f0;">Eyes - Side Glance</div>
<div class="a" style="left:525.60px;top:390.38px;width:133.80px;height:12.92px;background:#535353;"></div>
<div class="a" style="left:508.80px;top:390.38px;width:16.80px;height:12.92px;background:#b0901c;"></div>
<div class="a" style="left:508.80px;top:402.70px;width:150.60px;height:0.60px;background:#454545;"></div>
<div class="a" style="left:525.40px;top:390.38px;width:0.60px;height:12.92px;background:#454545;"></div>
<div class="a" style="left:513.40px;top:392.98px;width:7.60px;height:7.60px;background:transparent;border:0.6px solid rgba(60,45,0,0.16);border-radius:1px"></div>
<svg class="a" style="left:525.40px;top:392.64px;" width="8" height="8" viewBox="-4 -4 8 8"><path d="M-1,-2.4 L1.2,0 L-1,2.4" fill="none" stroke="#d6d6d6" stroke-width="0.8" stroke-linecap="round" stroke-linejoin="round"/></svg>
<svg class="a" style="left:534.00px;top:391.64px;" width="10" height="10" viewBox="-5 -5 10 10"><path d="M-4.2,-3 H-1.2 L-0.2,-1.9 H4.2 V3.2 H-4.2 Z" fill="#e6e6e6"/><path d="M-4.2,-1.2 H4.2" stroke="#535353" stroke-width="0.5"/></svg>
<div class="t" style="left:548.80px;top:393.92px;font-size:6.02px;color:#f0f0f0;">Eyes - Lidded</div>
<div class="a" style="left:525.60px;top:403.30px;width:133.80px;height:12.92px;background:#535353;"></div>
<div class="a" style="left:508.80px;top:403.30px;width:16.80px;height:12.92px;background:#b0901c;"></div>
<div class="a" style="left:508.80px;top:415.62px;width:150.60px;height:0.60px;background:#454545;"></div>
<div class="a" style="left:525.40px;top:403.30px;width:0.60px;height:12.92px;background:#454545;"></div>
<div class="a" style="left:513.40px;top:405.90px;width:7.60px;height:7.60px;background:transparent;border:0.6px solid rgba(60,45,0,0.16);border-radius:1px"></div>
<svg class="a" style="left:525.40px;top:405.56px;" width="8" height="8" viewBox="-4 -4 8 8"><path d="M-1,-2.4 L1.2,0 L-1,2.4" fill="none" stroke="#d6d6d6" stroke-width="0.8" stroke-linecap="round" stroke-linejoin="round"/></svg>
<svg class="a" style="left:534.00px;top:404.56px;" width="10" height="10" viewBox="-5 -5 10 10"><path d="M-4.2,-3 H-1.2 L-0.2,-1.9 H4.2 V3.2 H-4.2 Z" fill="#e6e6e6"/><path d="M-4.2,-1.2 H4.2" stroke="#535353" stroke-width="0.5"/></svg>
<div class="t" style="left:548.80px;top:406.84px;font-size:6.02px;color:#f0f0f0;">Eyes - Excited</div>
<div class="a" style="left:525.60px;top:416.22px;width:133.80px;height:12.92px;background:#6b6b6b;"></div>
<div class="a" style="left:508.80px;top:416.22px;width:16.80px;height:12.92px;background:#b0901c;"></div>
<div class="a" style="left:508.80px;top:428.54px;width:150.60px;height:0.60px;background:#454545;"></div>
<div class="a" style="left:525.40px;top:416.22px;width:0.60px;height:12.92px;background:#454545;"></div>
<div class="a" style="left:513.40px;top:418.82px;width:7.60px;height:7.60px;background:transparent;border:0.6px solid rgba(60,45,0,0.16);border-radius:1px"></div>
<svg class="a" style="left:525.40px;top:418.48px;" width="8" height="8" viewBox="-4 -4 8 8"><path d="M-1,-2.4 L1.2,0 L-1,2.4" fill="none" stroke="#d6d6d6" stroke-width="0.8" stroke-linecap="round" stroke-linejoin="round"/></svg>
<svg class="a" style="left:534.00px;top:417.48px;" width="10" height="10" viewBox="-5 -5 10 10"><path d="M-4.2,-3 H-1.2 L-0.2,-1.9 H4.2 V3.2 H-4.2 Z" fill="#e6e6e6"/><path d="M-4.2,-1.2 H4.2" stroke="#535353" stroke-width="0.5"/></svg>
<div class="t" style="left:548.80px;top:419.76px;font-size:6.02px;color:#f0f0f0;">Mouth - Tired</div>
<div class="a" style="left:525.60px;top:429.14px;width:133.80px;height:12.92px;background:#535353;"></div>
<div class="a" style="left:508.80px;top:429.14px;width:16.80px;height:12.92px;background:#b0901c;"></div>
<div class="a" style="left:508.80px;top:441.46px;width:150.60px;height:0.60px;background:#454545;"></div>
<div class="a" style="left:525.40px;top:429.14px;width:0.60px;height:12.92px;background:#454545;"></div>
<div class="a" style="left:513.40px;top:431.74px;width:7.60px;height:7.60px;background:transparent;border:0.6px solid rgba(60,45,0,0.16);border-radius:1px"></div>
<svg class="a" style="left:525.40px;top:431.40px;" width="8" height="8" viewBox="-4 -4 8 8"><path d="M-1,-2.4 L1.2,0 L-1,2.4" fill="none" stroke="#d6d6d6" stroke-width="0.8" stroke-linecap="round" stroke-linejoin="round"/></svg>
<svg class="a" style="left:534.00px;top:430.40px;" width="10" height="10" viewBox="-5 -5 10 10"><path d="M-4.2,-3 H-1.2 L-0.2,-1.9 H4.2 V3.2 H-4.2 Z" fill="#e6e6e6"/><path d="M-4.2,-1.2 H4.2" stroke="#535353" stroke-width="0.5"/></svg>
<div class="t" style="left:548.80px;top:432.68px;font-size:6.02px;color:#f0f0f0;">Mouth - Closed Smile</div>
<div class="a" style="left:525.60px;top:442.06px;width:133.80px;height:12.92px;background:#535353;"></div>
<div class="a" style="left:508.80px;top:442.06px;width:16.80px;height:12.92px;background:#b0901c;"></div>
<div class="a" style="left:508.80px;top:454.38px;width:150.60px;height:0.60px;background:#454545;"></div>
<div class="a" style="left:525.40px;top:442.06px;width:0.60px;height:12.92px;background:#454545;"></div>
<div class="a" style="left:513.40px;top:444.66px;width:7.60px;height:7.60px;background:transparent;border:0.6px solid rgba(60,45,0,0.16);border-radius:1px"></div>
<svg class="a" style="left:525.40px;top:444.32px;" width="8" height="8" viewBox="-4 -4 8 8"><path d="M-1,-2.4 L1.2,0 L-1,2.4" fill="none" stroke="#d6d6d6" stroke-width="0.8" stroke-linecap="round" stroke-linejoin="round"/></svg>
<svg class="a" style="left:534.00px;top:443.32px;" width="10" height="10" viewBox="-5 -5 10 10"><path d="M-4.2,-3 H-1.2 L-0.2,-1.9 H4.2 V3.2 H-4.2 Z" fill="#e6e6e6"/><path d="M-4.2,-1.2 H4.2" stroke="#535353" stroke-width="0.5"/></svg>
<div class="t" style="left:548.80px;top:445.60px;font-size:6.02px;color:#f0f0f0;">Mouth - Open Grin</div>
<div class="a" style="left:525.60px;top:454.98px;width:133.80px;height:12.92px;background:#535353;"></div>
<div class="a" style="left:508.80px;top:454.98px;width:16.80px;height:12.92px;background:#b0901c;"></div>
<div class="a" style="left:508.80px;top:467.30px;width:150.60px;height:0.60px;background:#454545;"></div>
<div class="a" style="left:525.40px;top:454.98px;width:0.60px;height:12.92px;background:#454545;"></div>
<div class="a" style="left:513.40px;top:457.58px;width:7.60px;height:7.60px;background:transparent;border:0.6px solid rgba(60,45,0,0.16);border-radius:1px"></div>
<svg class="a" style="left:525.40px;top:457.24px;" width="8" height="8" viewBox="-4 -4 8 8"><path d="M-1,-2.4 L1.2,0 L-1,2.4" fill="none" stroke="#d6d6d6" stroke-width="0.8" stroke-linecap="round" stroke-linejoin="round"/></svg>
<svg class="a" style="left:534.00px;top:456.24px;" width="10" height="10" viewBox="-5 -5 10 10"><path d="M-4.2,-3 H-1.2 L-0.2,-1.9 H4.2 V3.2 H-4.2 Z" fill="#e6e6e6"/><path d="M-4.2,-1.2 H4.2" stroke="#535353" stroke-width="0.5"/></svg>
<div class="t" style="left:548.80px;top:458.52px;font-size:6.02px;color:#f0f0f0;">Nose</div>
<div class="a" style="left:525.60px;top:467.90px;width:133.80px;height:12.92px;background:#535353;"></div>
<div class="a" style="left:508.80px;top:467.90px;width:16.80px;height:12.92px;background:#b0901c;"></div>
<div class="a" style="left:508.80px;top:480.22px;width:150.60px;height:0.60px;background:#454545;"></div>
<div class="a" style="left:525.40px;top:467.90px;width:0.60px;height:12.92px;background:#454545;"></div>
<svg class="a" style="left:512.20px;top:469.16px;" width="10" height="10" viewBox="-5 -5 10 10"><path d="M-3.6,0 C-2.2,-2.6 2.2,-2.6 3.6,0 C2.2,2.6 -2.2,2.6 -3.6,0 Z" fill="#f4f4f4"/><circle r="1.25" fill="#333"/><circle r="0.5" cx="0" cy="0" fill="#333"/></svg>
<svg class="a" style="left:525.40px;top:470.16px;" width="8" height="8" viewBox="-4 -4 8 8"><path d="M-1,-2.4 L1.2,0 L-1,2.4" fill="none" stroke="#d6d6d6" stroke-width="0.8" stroke-linecap="round" stroke-linejoin="round"/></svg>
<svg class="a" style="left:534.00px;top:469.16px;" width="10" height="10" viewBox="-5 -5 10 10"><path d="M-4.2,-3 H-1.2 L-0.2,-1.9 H4.2 V3.2 H-4.2 Z" fill="#e6e6e6"/><path d="M-4.2,-1.2 H4.2" stroke="#535353" stroke-width="0.5"/></svg>
<div class="t" style="left:548.80px;top:471.44px;font-size:6.02px;color:#f0f0f0;">Face</div>
<div class="a" style="left:525.60px;top:480.82px;width:133.80px;height:12.92px;background:#535353;"></div>
<div class="a" style="left:508.80px;top:480.82px;width:16.80px;height:12.92px;background:#b0901c;"></div>
<div class="a" style="left:508.80px;top:493.14px;width:150.60px;height:0.60px;background:#454545;"></div>
<div class="a" style="left:525.40px;top:480.82px;width:0.60px;height:12.92px;background:#454545;"></div>
<svg class="a" style="left:512.20px;top:482.08px;" width="10" height="10" viewBox="-5 -5 10 10"><path d="M-3.6,0 C-2.2,-2.6 2.2,-2.6 3.6,0 C2.2,2.6 -2.2,2.6 -3.6,0 Z" fill="#f4f4f4"/><circle r="1.25" fill="#333"/><circle r="0.5" cx="0" cy="0" fill="#333"/></svg>
<svg class="a" style="left:525.40px;top:483.08px;" width="8" height="8" viewBox="-4 -4 8 8"><path d="M-1,-2.4 L1.2,0 L-1,2.4" fill="none" stroke="#d6d6d6" stroke-width="0.8" stroke-linecap="round" stroke-linejoin="round"/></svg>
<svg class="a" style="left:534.00px;top:482.08px;" width="10" height="10" viewBox="-5 -5 10 10"><path d="M-4.2,-3 H-1.2 L-0.2,-1.9 H4.2 V3.2 H-4.2 Z" fill="#e6e6e6"/><path d="M-4.2,-1.2 H4.2" stroke="#535353" stroke-width="0.5"/></svg>
<div class="t" style="left:548.80px;top:484.36px;font-size:6.02px;color:#f0f0f0;">Ears</div>
<div class="a" style="left:525.60px;top:493.74px;width:133.80px;height:12.92px;background:#535353;"></div>
<div class="a" style="left:508.80px;top:493.74px;width:16.80px;height:12.92px;background:#5d8c3a;"></div>
<div class="a" style="left:508.80px;top:506.06px;width:150.60px;height:0.60px;background:#454545;"></div>
<div class="a" style="left:525.40px;top:493.74px;width:0.60px;height:12.92px;background:#454545;"></div>
<svg class="a" style="left:512.20px;top:495.00px;" width="10" height="10" viewBox="-5 -5 10 10"><path d="M-3.6,0 C-2.2,-2.6 2.2,-2.6 3.6,0 C2.2,2.6 -2.2,2.6 -3.6,0 Z" fill="#f4f4f4"/><circle r="1.25" fill="#333"/><circle r="0.5" cx="0" cy="0" fill="#333"/></svg>
<svg class="a" style="left:525.40px;top:496.00px;" width="8" height="8" viewBox="-4 -4 8 8"><path d="M-1,-2.4 L1.2,0 L-1,2.4" fill="none" stroke="#d6d6d6" stroke-width="0.8" stroke-linecap="round" stroke-linejoin="round"/></svg>
<svg class="a" style="left:534.00px;top:495.00px;" width="10" height="10" viewBox="-5 -5 10 10"><path d="M-4.2,-3 H-1.2 L-0.2,-1.9 H4.2 V3.2 H-4.2 Z" fill="#e6e6e6"/><path d="M-4.2,-1.2 H4.2" stroke="#535353" stroke-width="0.5"/></svg>
<div class="t" style="left:548.80px;top:497.28px;font-size:6.02px;color:#f0f0f0;">Hat Tail</div>
<div class="a" style="left:508.80px;top:506.66px;width:150.60px;height:21.20px;background:#535353;"></div>
<div class="a" style="left:525.40px;top:506.66px;width:0.60px;height:21.20px;background:#454545;"></div>
<div class="a" style="left:508.80px;top:527.86px;width:150.60px;height:0.70px;background:#404040;"></div>
<svg class="a" style="left:512.20px;top:512.26px;" width="10" height="10" viewBox="-5 -5 10 10"><path d="M-3.6,0 C-2.2,-2.6 2.2,-2.6 3.6,0 C2.2,2.6 -2.2,2.6 -3.6,0 Z" fill="#f4f4f4"/><circle r="1.25" fill="#333"/><circle r="0.5" cx="0" cy="0" fill="#333"/></svg>
<div class="a" style="left:528.40px;top:508.86px;width:17.40px;height:17.20px;background:#fff;border:0.5px solid #333"></div>
<div class="t" style="left:550.00px;top:514.59px;font-size:6.02px;color:#f0f0f0;">Background</div>
<svg class="a" style="left:642.20px;top:512.26px;" width="10" height="10" viewBox="-5 -5 10 10"><rect x="-2.7" y="-0.8" width="5.4" height="4.2" rx="0.7" class="s" style="stroke-width:0.8"/><path d="M-1.5,-0.8 V-2 A1.5,1.5 0 0 1 1.5,-2 V-0.8" class="s" style="stroke-width:0.8"/><circle cy="1.2" r="0.7" class="f"/></svg>
<div class="a" style="left:508.80px;top:527.90px;width:159.70px;height:3.80px;background:#4b4b4b;"></div>
<svg class="a" style="left:553.20px;top:532.80px;" width="10" height="10" viewBox="-5 -5 10 10"><rect x="-3.8" y="-1.3" width="4" height="2.6" rx="1.3" fill="none" stroke="#9a9a9a" stroke-width="0.8"/><rect x="-0.2" y="-1.3" width="4" height="2.6" rx="1.3" fill="none" stroke="#9a9a9a" stroke-width="0.8"/></svg>
<div class="t" style="left:569.4px;top:533.1999999999999px;font-size:7.6px;font-style:italic;font-family:'Liberation Serif',serif;color:#e6e6e6">fx</div>
<svg class="a" style="left:576.40px;top:540.40px;" width="2" height="2" viewBox="-1 -1 2 2"><path d="M0.9,-0.9 V0.9 H-0.9 Z" fill="#cfcfcf"/></svg>
<svg class="a" style="left:583.30px;top:532.80px;" width="10" height="10" viewBox="-5 -5 10 10"><rect x="-3.8" y="-2.8" width="7.6" height="5.6" rx="0.6" class="f"/><circle r="1.7" fill="#535353"/></svg>
<svg class="a" style="left:598.60px;top:532.80px;" width="10" height="10" viewBox="-5 -5 10 10"><circle r="3.2" class="s" style="stroke-width:0.9"/><path d="M-2.26,2.26 A3.2,3.2 0 0 1 2.26,-2.26 Z" class="f"/></svg>
<svg class="a" style="left:607.20px;top:540.40px;" width="2" height="2" viewBox="-1 -1 2 2"><path d="M0.9,-0.9 V0.9 H-0.9 Z" fill="#cfcfcf"/></svg>
<svg class="a" style="left:613.50px;top:532.80px;" width="10" height="10" viewBox="-5 -5 10 10"><path d="M-3.8,-2.8 H-1 L0,-1.7 H3.8 V3 H-3.8 Z" class="f"/></svg>
<svg class="a" style="left:628.00px;top:532.80px;" width="10" height="10" viewBox="-5 -5 10 10"><path d="M-0.6,-2.8 H2.8 V2.8 H-2.8 V-0.6 Z" class="s" style="stroke-width:0.85"/><path d="M-2.8,-0.6 H-0.6 V-2.8 Z" class="f"/></svg>
<svg class="a" style="left:643.30px;top:532.80px;" width="10" height="10" viewBox="-5 -5 10 10"><path d="M-2.3,-1.4 H2.3 L1.9,3.2 H-1.9 Z" fill="#c8c8c8"/><path d="M-2.8,-2.2 H2.8 M-0.9,-3.1 H0.9" fill="none" stroke="#c8c8c8" stroke-width="0.8"/><path d="M-0.8,-0.3 V2.2 M0.8,-0.3 V2.2" stroke="#535353" stroke-width="0.5"/></svg>
<div class="a" style="left:54.50px;top:460.20px;width:431.30px;height:1.50px;background:#3a3a3a;"></div>
<div class="a" style="left:54.50px;top:461.60px;width:431.30px;height:84.10px;background:#535353;"></div>
<div class="a" style="left:54.50px;top:461.60px;width:431.30px;height:15.60px;background:#424242;"></div>
<div class="a" style="left:54.50px;top:461.60px;width:34.80px;height:16.00px;background:#535353;"></div>
<div class="t b" style="left:59.40px;top:466.13px;font-size:6.2px;color:#ececec;">Timeline</div>
<div class="a" style="left:475.70px;top:466.30px;width:6.00px;height:4.60px;background:#767676;"></div>
<div class="a" style="left:475.70px;top:469.80px;width:6.00px;height:1.00px;background:#a4a4a4;"></div>
<svg class="a" style="left:58.30px;top:483.50px;" width="8" height="8" viewBox="-4 -4 8 8"><path d="M-2.9,-2.2 V2.2" stroke="#b2b2b2" stroke-width="0.9"/><path d="M3.2,-2.3 V2.3 L-1.4,0 Z" fill="#b2b2b2"/></svg>
<svg class="a" style="left:75.40px;top:483.50px;" width="8" height="8" viewBox="-4 -4 8 8"><path d="M0.9,-2.3 V2.3 L-3.4,0 Z" fill="#b2b2b2"/><path d="M2.6,-2.1 V2.1" stroke="#b2b2b2" stroke-width="1"/></svg>
<svg class="a" style="left:93.40px;top:483.50px;" width="8" height="8" viewBox="-4 -4 8 8"><path d="M-2.2,-2.7 V2.7 L2.9,0 Z" fill="#c2c2c2"/></svg>
<svg class="a" style="left:110.50px;top:483.50px;" width="8" height="8" viewBox="-4 -4 8 8"><path d="M-0.9,-2.3 V2.3 L3.4,0 Z" fill="#b2b2b2"/><path d="M-2.6,-2.1 V2.1" stroke="#b2b2b2" stroke-width="1"/></svg>
<svg class="a" style="left:127.10px;top:483.50px;" width="8" height="8" viewBox="-4 -4 8 8"><path d="M1.7,-2.6 V2.6 L-1.2,0.9 H-2.4 V-0.9 H-1.2 Z" fill="#b2b2b2"/></svg>
<svg class="a" style="left:145.00px;top:483.50px;" width="8" height="8" viewBox="-4 -4 8 8"><circle r="1.7" fill="none" stroke="#bebebe" stroke-width="1.4"/><circle r="2.5" fill="none" stroke="#bebebe" stroke-width="0.9" stroke-dasharray="0.9 1.06"/></svg>
<svg class="a" style="left:152.40px;top:490.70px;" width="2" height="2" viewBox="-1 -1 2 2"><path d="M0.6,-0.6 V0.6 H-0.6 Z" fill="#8a8a8a"/></svg>
<div class="a" style="left:159.80px;top:477.60px;width:0.70px;height:20.20px;background:#444;"></div>
<svg class="a" style="left:165.20px;top:482.50px;" width="10" height="10" viewBox="-5 -5 10 10"><circle cx="-2.3" cy="-1.7" r="1.1" class="s" style="stroke-width:0.7"/><circle cx="-2.3" cy="1.7" r="1.1" class="s" style="stroke-width:0.7"/><path d="M-1.4,-1 L3.4,2.1 M-1.4,1 L3.4,-2.1" class="s" style="stroke-width:0.7"/></svg>
<svg class="a" style="left:182.80px;top:482.50px;" width="10" height="10" viewBox="-5 -5 10 10"><rect x="-2.6" y="-2.6" width="5.2" height="5.2" class="s" style="stroke-width:0.7"/><path d="M2.6,-2.6 V2.6 H-2.6 Z" class="f"/></svg>
<div class="a" style="left:199.40px;top:477.60px;width:0.70px;height:20.20px;background:#444;"></div>
<div class="a" style="left:460.00px;top:477.60px;width:0.70px;height:20.20px;background:#444;"></div>
<div class="a" style="left:54.50px;top:497.80px;width:421.20px;height:0.70px;background:#444;"></div>
<div class="a" style="left:475.40px;top:498.40px;width:0.70px;height:47.30px;background:#464646;"></div>
<div class="a" style="left:224.60px;top:511.30px;width:78.40px;height:9.60px;background:#424242;border:0.6px solid #5c5c5c;border-radius:1.5px"></div>
<div class="t" style="left:224.6px;width:78.4px;text-align:center;top:512.60px;font-size:6.25px;color:#f2f2f2;-webkit-text-stroke:0.12px #f2f2f2">Create Frame Animation</div>
<div class="a" style="left:305.10px;top:511.30px;width:9.90px;height:9.60px;background:#424242;border:0.6px solid #5c5c5c;border-radius:1.5px"></div>
<svg class="a" style="left:306.10px;top:512.20px;" width="8" height="8" viewBox="-4 -4 8 8"><path d="M-1.3,-0.45 L0,0.75 L1.3,-0.45" fill="none" stroke="#c8c8c8" stroke-width="0.9" stroke-linecap="round" stroke-linejoin="round"/></svg>
<div class="a" style="left:54.50px;top:534.50px;width:421.20px;height:0.70px;background:#444;"></div>
<div class="a" style="left:54.50px;top:535.20px;width:421.20px;height:10.50px;background:#494949;"></div>
<div class="a" style="left:199.30px;top:535.20px;width:89.00px;height:10.50px;background:#555555;"></div>
<div class="a" style="left:198.60px;top:535.20px;width:0.70px;height:10.50px;background:#444;"></div>
<div class="a" style="left:57.00px;top:538.90px;width:3.30px;height:2.80px;background:transparent;border:0.6px solid #8c8c8c;border-radius:0.8px"></div>
<div class="a" style="left:60.50px;top:538.90px;width:3.30px;height:2.80px;background:transparent;border:0.6px solid #8c8c8c;border-radius:0.8px"></div>
<div class="a" style="left:64.00px;top:538.90px;width:3.30px;height:2.80px;background:transparent;border:0.6px solid #8c8c8c;border-radius:0.8px"></div>
<svg class="a" style="left:73.40px;top:535.20px;" width="10" height="10" viewBox="-5 -5 10 10"><path d="M-3.4,2.8 C-3,0.2 -1,-0.8 0.8,-0.8 V-2.8 L3.8,0 L0.8,2.6 V0.9 C-0.8,0.8 -2.2,1.2 -3.4,2.8 Z" fill="#c8c8c8"/></svg>
<svg class="a" style="left:201.70px;top:535.00px;" width="12" height="12" viewBox="-6 -6 12 12"><path d="M-2.53,1.2100000000000002 L-0.8800000000000001,-0.77 L-0.22000000000000003,-0.11000000000000001 L0.66,-1.32 L2.64,1.2100000000000002 Z" fill="#c4c4c4"/></svg>
<div class="a" style="left:223.20px;top:537.20px;width:42.20px;height:1.50px;background:#7c7c7c;"></div>
<svg class="a" style="left:273.90px;top:534.20px;" width="12" height="12" viewBox="-6 -6 12 12"><path d="M-4.369999999999999,2.09 L-1.52,-1.3299999999999998 L-0.38,-0.19 L1.14,-2.28 L4.56,2.09 Z" fill="#c4c4c4"/></svg>
</div></body></html>
